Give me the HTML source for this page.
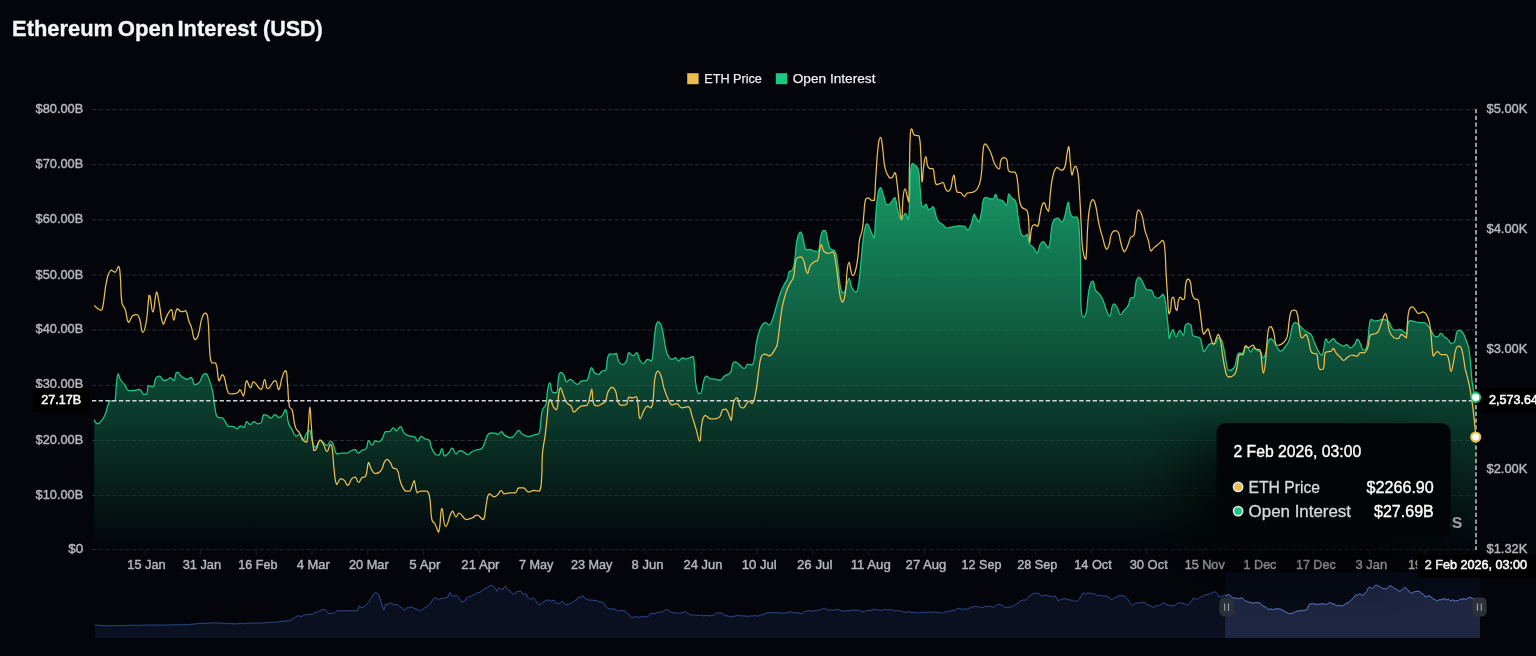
<!DOCTYPE html>
<html lang="en"><head><meta charset="utf-8"><title>Ethereum Open Interest (USD)</title>
<style>
html,body{margin:0;padding:0;background:#03050a;}
body{width:1536px;height:656px;overflow:hidden;font-family:"Liberation Sans",sans-serif;}
svg{display:block;position:absolute;left:0;top:0}
text{font-family:"Liberation Sans",sans-serif;}
</style></head><body>
<svg style="will-change:transform" width="1536" height="656" viewBox="0 0 1536 656">
<defs>
<linearGradient id="g" gradientUnits="userSpaceOnUse" x1="0" y1="163" x2="0" y2="550">
<stop offset="0" stop-color="#1ec683" stop-opacity="0.78"/><stop offset="1" stop-color="#1ec683" stop-opacity="0"/>
</linearGradient>
<filter id="ts" filterUnits="userSpaceOnUse" x="1000" y="300" width="536" height="356"><feGaussianBlur stdDeviation="30"/></filter>
<path id="area" d="M94.2 419.6C94.2 419.6 95.6 423.6 97.5 423.8C99.4 423.8 100.0 422.5 101.7 420.4C103.8 417.8 103.8 417.6 105.1 414.5C106.8 410.5 106.1 410.2 107.6 406.2C108.6 403.5 108.1 402.7 110.1 401.1C111.9 400.3 114.4 401.1 115.1 400.3C116.5 393.5 115.5 391.9 116.5 383.5C117.1 378.6 117.0 375.1 118.2 373.8C118.9 373.8 118.7 376.8 120.2 379.3C121.8 382.1 122.4 381.7 124.4 384.4C126.6 387.4 125.8 388.8 128.6 390.7C130.4 390.7 131.1 390.7 133.6 390.7C136.6 390.3 137.1 389.4 139.5 389.4C142.1 390.4 141.2 392.7 143.6 394.4C144.8 394.4 146.1 394.4 146.7 394.4C148.3 391.1 146.7 387.9 148.3 385.5C149.4 385.5 151.6 386.9 152.9 386.9C155.5 384.3 153.8 381.6 156.2 377.7C157.1 376.2 158.2 376.0 159.6 376.0C162.0 376.9 161.3 379.7 163.8 380.7C165.5 380.7 166.0 380.2 168.0 379.3C169.3 378.7 169.3 377.7 170.5 377.7C172.2 378.1 172.8 380.7 173.8 380.7C175.7 379.0 174.6 376.1 176.3 372.6C176.7 372.3 177.4 372.3 178.0 372.3C179.9 373.7 179.3 374.7 181.4 376.3C183.9 378.2 184.3 379.0 187.2 379.3C189.1 379.3 189.8 377.3 191.1 377.3C193.6 379.1 192.3 383.0 194.8 384.7C196.2 384.7 197.6 384.4 199.0 382.7C201.8 379.4 200.6 378.1 203.2 374.6C204.1 373.5 205.1 373.5 206.0 373.5C208.0 375.1 207.8 376.3 209.0 379.3C211.0 384.6 211.2 384.6 212.4 390.2C214.2 398.5 213.3 398.7 214.9 407.0C215.8 412.1 214.9 413.4 217.4 417.1C218.6 417.9 220.6 417.1 222.4 417.9C226.0 421.0 224.6 423.4 228.3 426.3C230.1 426.6 231.0 426.3 233.3 426.6C235.3 427.2 235.3 428.8 237.0 428.8C238.8 428.6 238.5 426.1 240.4 425.8C242.0 425.8 242.7 427.5 243.9 427.5C245.9 426.2 244.9 422.5 246.7 421.6C248.0 421.6 248.3 424.6 250.1 424.6C252.0 424.6 252.0 421.8 254.0 421.6C255.7 421.6 255.7 423.4 257.6 423.8C259.2 423.8 260.1 423.8 261.0 422.9C263.2 419.6 261.5 416.9 263.8 414.5C264.9 414.5 265.9 415.0 267.7 415.9C269.5 416.8 269.5 418.2 271.1 418.2C273.1 417.8 272.9 414.7 274.9 414.5C276.7 414.5 276.6 417.2 278.6 417.6C280.2 417.6 280.8 417.3 282.0 415.9C284.3 413.2 284.5 409.5 285.6 409.5C287.8 412.1 286.5 416.9 288.7 423.8C289.7 426.9 290.3 426.7 292.0 429.6C293.9 433.0 293.4 434.8 295.9 436.3C297.2 436.3 298.3 434.3 299.6 434.3C301.8 435.6 301.3 440.5 302.9 440.5C304.6 440.4 304.3 436.9 306.3 433.8C307.6 431.7 308.7 430.1 309.6 430.1C311.6 432.4 310.4 435.5 312.1 440.5C313.3 444.0 313.6 447.2 315.5 447.2C317.6 447.1 317.4 441.6 320.0 440.1C321.3 440.1 321.8 441.3 323.4 442.6C325.1 444.0 325.1 445.5 326.7 445.5C328.9 445.0 329.0 441.1 330.9 441.0C332.4 441.0 332.4 442.9 333.4 445.1C335.4 449.4 334.1 451.4 336.8 454.0C338.3 454.0 339.3 453.2 341.8 453.0C344.7 453.0 345.0 453.0 347.7 453.0C349.6 452.5 349.2 451.5 351.0 450.7C352.9 449.8 353.5 449.7 355.2 449.7C357.1 450.3 356.6 453.1 358.2 453.2C359.9 453.2 359.9 451.4 361.9 450.2C363.8 449.1 364.9 450.2 366.1 448.5C368.3 445.4 366.8 441.5 368.6 440.5C369.8 440.5 370.3 445.1 372.0 445.1C373.7 445.1 373.3 441.6 375.3 440.6C376.6 440.6 377.2 441.8 378.7 441.8C380.8 441.2 381.0 440.5 382.4 438.4C384.4 435.4 383.2 434.0 385.4 431.7C386.4 431.7 387.1 431.7 388.7 431.7C389.6 431.6 389.7 431.5 390.4 430.9C392.0 429.6 391.8 427.9 393.3 427.9C394.8 427.9 394.8 430.9 396.3 430.9C398.4 430.5 398.7 426.7 400.5 426.7C402.5 427.2 401.6 430.2 403.8 432.6C405.8 434.8 406.1 434.8 408.9 435.9C411.6 436.8 412.4 435.9 414.7 436.8C416.8 438.1 416.2 441.3 417.7 441.3C419.4 441.2 419.1 437.0 421.1 436.3C422.6 436.3 422.8 437.9 424.8 438.9C426.7 439.8 427.8 438.9 429.0 440.1C431.2 442.9 429.8 444.1 431.5 447.7C433.2 451.4 433.0 452.0 435.7 454.7C436.8 455.2 438.0 455.2 439.0 455.2C441.1 453.1 440.6 448.5 441.9 448.5C443.3 448.7 442.4 454.4 444.4 456.0C445.6 456.0 446.6 455.1 448.2 453.5C450.6 451.2 450.5 448.2 452.4 448.2C454.3 448.3 453.7 453.3 455.8 454.0C457.5 454.0 457.7 451.1 460.0 450.7C461.9 450.7 462.2 451.3 464.2 452.4C466.0 453.3 465.8 454.7 467.5 454.7C470.0 454.4 469.9 452.6 472.6 451.3C474.9 450.1 475.1 450.5 477.6 449.7C479.7 449.1 480.4 449.7 481.8 448.5C484.2 446.0 483.6 445.2 485.1 441.8C486.5 438.5 485.7 437.9 487.6 435.1C488.7 433.5 489.1 433.3 491.0 432.9C493.3 432.9 493.6 432.9 496.0 433.4C497.0 433.6 496.9 434.6 497.7 434.6C499.6 434.0 499.7 431.7 501.4 431.7C503.0 431.8 502.5 434.0 504.4 435.1C507.4 436.9 507.9 437.6 511.1 437.6C513.0 437.6 513.0 436.5 514.5 435.1C516.8 432.9 516.6 430.7 518.7 430.4C520.3 430.4 520.0 432.6 522.0 433.9C524.6 435.6 524.9 435.5 527.9 436.4C528.9 436.4 529.0 436.4 530.0 436.4C532.5 435.8 532.5 435.6 535.0 434.7C537.1 433.9 538.4 434.7 539.2 433.0C540.9 427.8 540.0 426.7 540.9 420.5C541.7 415.0 541.0 414.8 542.6 409.6C543.5 406.8 545.2 407.4 545.9 404.5C547.6 397.7 546.3 397.3 547.6 390.3C548.3 386.4 548.7 382.7 549.8 382.7C551.2 383.3 550.1 389.0 552.6 392.5C553.6 392.5 556.2 392.5 556.8 392.5C558.5 386.7 557.3 385.0 558.5 377.7C559.0 375.0 558.7 373.4 560.2 372.4C561.2 372.4 562.5 372.9 563.5 374.4C565.6 377.6 564.3 380.3 566.5 381.9C567.7 381.9 568.4 379.4 570.2 379.4C572.4 379.6 572.2 381.2 574.4 382.7C576.0 383.7 576.3 384.4 577.8 384.4C579.6 384.0 579.1 382.0 581.1 381.1C583.7 380.2 585.2 381.1 587.0 380.2C589.4 377.8 588.2 376.4 589.5 372.7C590.4 370.2 590.3 367.7 591.5 367.7C592.8 367.7 592.5 370.8 594.5 372.7C596.1 374.2 596.9 374.4 598.7 374.4C600.7 374.0 600.1 372.2 602.1 371.0C603.7 370.2 605.2 371.0 605.9 370.2C607.5 365.4 606.2 364.2 607.5 358.4C608.0 356.0 607.9 355.0 609.6 353.9C611.0 353.9 611.7 354.2 613.8 354.2C615.1 354.1 615.7 353.4 616.3 353.4C618.3 356.3 616.8 358.2 618.9 361.8C620.1 363.8 621.1 364.6 623.0 364.6C624.9 364.4 625.3 363.2 626.4 361.0C628.3 357.2 626.8 354.3 628.9 352.6C630.1 352.6 631.0 355.6 633.1 355.6C635.0 355.6 635.6 352.6 636.8 352.6C638.9 354.0 637.8 356.7 639.8 360.1C641.0 362.1 641.5 363.5 643.2 363.5C645.3 363.3 645.0 360.0 647.4 359.3C649.2 359.3 650.7 361.0 651.5 361.0C653.2 357.7 652.5 355.6 653.2 350.1C654.5 339.5 653.8 339.4 655.4 328.9C656.0 325.2 655.9 323.9 657.6 321.8C658.2 321.8 659.5 321.9 660.1 323.0C662.0 326.3 661.7 326.7 662.6 330.6C664.7 340.3 663.8 340.5 666.1 350.1C667.0 354.0 666.9 354.5 669.1 357.6C670.1 359.1 670.8 359.3 672.5 359.3C673.9 359.3 674.1 357.6 675.3 357.6C677.0 358.1 676.7 360.9 678.4 361.0C680.2 361.0 680.1 358.5 682.2 357.9C683.8 357.9 684.1 358.9 685.9 358.9C688.0 358.8 688.0 358.4 690.1 357.6C691.6 357.1 692.5 356.3 693.0 356.3C694.6 360.6 694.0 362.4 694.6 368.5C695.5 376.9 694.7 377.0 696.0 385.3C696.7 389.6 696.6 390.7 698.5 393.6C699.1 393.6 700.5 393.6 701.0 392.8C703.0 388.1 701.9 387.2 703.5 381.9C704.4 378.8 704.1 376.9 706.0 376.0C707.5 376.0 707.9 377.8 710.2 378.6C712.1 379.1 712.3 378.8 714.4 379.1C717.4 379.6 717.8 380.2 720.3 380.2C722.8 379.4 722.1 377.8 724.5 376.0C727.1 374.0 728.6 375.3 730.3 372.7C732.7 369.0 730.9 367.6 732.8 363.5C733.4 362.2 734.1 361.8 735.4 361.8C737.5 362.3 737.5 363.5 739.6 365.1C741.9 366.8 742.1 368.5 744.2 368.5C746.3 368.2 745.6 365.0 747.9 364.0C749.6 364.0 751.0 365.1 752.1 365.1C754.3 362.7 753.8 361.0 754.6 356.8C755.7 351.0 755.0 350.8 756.0 345.0C757.2 338.5 757.0 338.4 759.0 332.2C760.2 328.3 760.2 328.0 762.4 324.7C763.4 323.2 763.9 322.5 765.4 322.5C767.2 322.6 767.6 325.0 769.1 325.0C771.1 324.2 771.3 322.6 772.4 319.7C775.0 312.8 774.4 312.5 776.6 305.4C778.6 298.7 778.4 298.6 780.8 292.0C782.2 288.1 782.4 288.2 784.2 284.5C785.7 281.5 786.3 281.7 787.5 278.6C788.8 275.4 787.6 274.7 789.2 271.9C790.1 270.3 791.9 271.5 792.6 269.7C794.9 263.9 794.1 263.3 795.1 256.8C796.2 249.3 795.4 249.1 796.7 241.7C797.5 237.2 797.5 237.0 799.3 233.0C799.7 232.2 800.6 232.1 801.0 232.1C802.7 235.2 802.3 236.3 803.5 240.5C804.8 245.1 803.7 246.6 806.0 249.7C807.0 249.7 808.2 249.4 810.2 249.4C812.8 249.9 812.7 251.0 815.3 251.4C816.9 251.4 818.0 251.4 818.6 250.6C820.3 245.7 819.1 244.7 820.3 238.9C821.2 234.6 820.9 233.8 822.8 230.5C823.4 230.5 824.8 230.5 825.3 230.5C827.3 234.5 826.4 235.5 827.8 240.5C829.0 244.7 828.2 245.5 830.4 248.9C831.5 250.6 833.3 248.9 834.5 250.6C836.6 253.7 836.3 254.4 837.0 258.5C838.8 269.3 837.9 269.5 839.5 280.3C840.4 286.6 839.9 287.9 842.0 292.8C842.4 292.8 843.9 292.8 844.5 292.0C846.4 288.5 845.6 287.8 847.0 283.6C847.9 280.9 848.2 278.3 849.1 278.3C850.5 279.3 849.7 283.0 851.6 287.0C852.9 289.8 853.5 291.5 855.4 292.0C856.7 292.0 857.5 290.6 857.9 288.6C860.0 278.1 859.3 277.8 860.5 266.9C861.9 253.7 861.4 253.7 863.0 240.5C863.9 232.9 863.8 232.7 865.6 225.4C865.9 224.3 866.6 223.8 867.2 223.8C869.1 225.8 869.0 227.1 870.6 230.5C872.3 234.2 873.2 238.0 873.9 238.0C875.6 233.2 874.6 227.5 875.6 217.1C876.7 205.3 876.1 205.2 878.1 193.6C878.6 190.5 879.4 187.7 880.6 187.7C881.9 187.9 882.0 191.0 883.2 194.4C885.0 199.4 884.2 200.4 886.5 204.5C887.1 204.5 888.1 204.5 889.0 204.5C891.0 203.1 890.7 202.4 892.4 200.3C893.6 198.8 894.3 197.4 894.9 197.4C896.8 200.6 895.9 203.1 897.4 208.7C898.8 213.8 898.6 215.9 900.8 218.7C901.5 218.7 902.1 217.5 903.3 216.2C904.5 214.9 904.6 213.4 905.5 213.4C907.1 214.5 907.8 219.6 908.3 219.6C909.6 214.8 909.1 210.0 909.6 200.3C910.2 187.7 909.6 187.7 910.5 175.1C910.9 169.2 910.5 166.7 912.2 163.4C912.9 163.4 914.4 164.3 915.9 165.9C917.5 167.7 917.9 167.7 918.4 170.1C920.0 178.2 919.2 178.5 920.0 186.9C920.9 196.1 920.2 196.4 921.7 205.3C921.9 206.5 922.6 207.0 923.4 207.0C924.7 206.6 924.9 204.0 925.9 204.0C927.4 204.8 926.7 207.9 928.4 209.5C929.2 209.5 929.8 209.4 930.9 208.7C932.1 208.0 932.3 206.7 933.0 206.7C934.4 207.8 934.2 209.3 935.1 212.0C936.5 216.2 935.4 216.8 937.6 220.4C939.2 223.1 940.1 222.5 942.7 224.6C944.8 226.3 944.5 227.5 946.9 228.0C949.5 228.0 949.8 227.3 952.7 226.8C956.0 226.2 956.0 225.9 959.4 225.8C961.9 225.8 962.4 225.8 964.5 226.3C966.6 227.4 966.4 230.1 967.8 230.1C969.8 229.4 969.9 227.1 971.2 223.8C973.1 219.2 972.4 216.3 974.2 214.2C974.9 214.2 975.2 216.1 976.2 217.9C977.4 220.0 977.8 222.1 978.7 222.1C980.3 220.8 980.3 218.0 981.2 213.7C982.8 206.2 981.6 205.5 983.7 198.6C984.1 197.4 985.0 197.4 986.3 197.4C987.9 197.4 987.9 198.2 989.6 198.6C991.3 199.0 991.8 199.1 993.0 199.1C994.8 197.8 994.3 194.4 995.5 194.4C996.8 194.5 996.1 197.8 998.0 199.5C999.4 200.3 1000.5 199.5 1002.2 200.3C1004.7 202.1 1005.2 205.3 1006.4 205.3C1008.5 203.2 1007.1 196.6 1008.9 193.9C1009.6 193.9 1009.8 196.1 1011.4 197.8C1013.2 199.7 1014.8 198.7 1015.6 201.1C1018.1 208.4 1016.8 209.1 1018.1 217.1C1019.3 224.6 1018.7 224.8 1020.6 232.1C1021.2 234.4 1021.4 235.2 1023.1 236.3C1024.1 236.3 1024.7 236.2 1026.0 235.5C1026.8 235.1 1026.9 234.2 1027.2 234.2C1028.6 237.5 1027.4 239.3 1029.3 243.4C1030.5 246.0 1031.6 245.3 1033.5 247.6C1035.6 250.2 1035.8 253.1 1037.2 253.1C1039.2 252.1 1038.2 248.3 1040.2 244.2C1040.9 242.7 1041.4 242.8 1042.7 241.8C1043.1 241.7 1043.3 241.7 1043.6 241.7C1045.0 243.1 1044.9 243.4 1046.1 245.1C1047.2 246.7 1047.4 248.4 1048.1 248.4C1049.5 246.7 1049.5 244.3 1050.3 240.1C1051.0 236.2 1050.4 236.1 1051.1 232.2C1052.1 226.3 1051.2 225.5 1053.6 220.5C1054.6 218.4 1055.9 218.0 1057.8 218.0C1060.0 218.5 1060.0 222.2 1061.7 222.2C1063.4 222.0 1063.6 219.8 1064.5 217.1C1066.3 211.4 1065.6 211.2 1067.1 205.4C1067.5 203.7 1068.0 202.1 1068.4 202.1C1069.7 205.3 1068.7 208.2 1070.4 213.8C1071.0 215.7 1071.2 216.3 1072.9 217.1C1074.6 217.1 1076.3 217.1 1077.1 217.1C1079.1 221.5 1078.5 223.0 1079.1 228.9C1080.0 237.8 1079.6 237.8 1080.0 246.8C1080.3 255.1 1080.4 255.1 1080.5 263.5C1080.8 281.9 1080.5 282.0 1080.8 300.4C1081.0 307.6 1080.8 307.8 1081.8 314.7C1082.1 316.2 1083.0 317.2 1083.8 317.2C1085.2 316.4 1085.7 314.8 1086.3 312.1C1087.8 304.8 1086.9 304.6 1088.0 297.1C1089.0 290.3 1088.5 290.0 1090.5 283.6C1091.0 282.0 1092.3 281.1 1093.0 281.1C1094.9 283.6 1093.5 286.2 1095.6 290.4C1096.9 292.9 1098.0 292.2 1099.7 294.5C1101.7 297.2 1101.8 297.3 1103.1 300.4C1105.2 305.3 1104.4 305.6 1106.5 310.5C1107.8 313.6 1108.7 316.3 1109.8 316.3C1111.4 315.3 1110.5 311.5 1112.0 307.1C1112.6 305.3 1112.9 303.8 1114.0 303.8C1115.6 304.1 1116.0 305.7 1117.4 308.0C1119.2 311.1 1118.5 314.0 1120.4 314.7C1121.8 314.7 1122.3 312.6 1124.1 310.5C1126.2 308.0 1126.7 308.2 1128.2 305.4C1130.0 301.9 1128.7 300.8 1130.8 297.9C1131.7 297.1 1133.6 297.9 1134.1 297.1C1136.1 290.6 1134.3 289.2 1136.1 282.0C1136.8 279.4 1137.5 277.4 1139.1 277.4C1140.7 277.4 1141.0 279.6 1142.5 282.0C1144.8 285.6 1143.8 286.9 1146.7 289.5C1148.4 290.4 1150.0 289.5 1151.7 290.4C1153.8 292.3 1152.4 293.8 1154.2 296.2C1155.4 297.8 1155.9 298.4 1157.6 298.4C1159.3 298.4 1159.3 297.4 1160.9 296.2C1162.0 295.3 1162.4 294.2 1163.0 294.2C1164.5 295.7 1164.5 297.2 1165.1 300.4C1166.4 307.0 1166.0 307.1 1166.8 313.8C1167.7 322.2 1167.7 322.2 1168.5 330.6C1168.9 334.6 1168.5 338.3 1169.2 338.6C1169.9 338.6 1170.0 335.1 1171.4 331.9C1172.0 330.6 1172.5 329.7 1173.1 329.7C1174.8 331.5 1174.2 336.6 1175.9 336.9C1177.5 336.9 1177.7 331.1 1179.8 330.7C1181.5 330.7 1182.5 335.3 1183.5 335.3C1185.1 333.9 1183.6 330.3 1185.1 326.0C1185.7 324.4 1186.2 323.7 1187.7 323.5C1189.2 323.5 1190.3 323.6 1191.0 325.2C1192.7 329.5 1191.0 331.2 1192.7 335.3C1193.6 336.9 1194.8 336.0 1196.9 336.9C1198.6 337.6 1199.5 337.0 1200.2 338.6C1203.0 344.4 1201.4 349.2 1203.9 351.7C1205.2 351.7 1205.6 348.7 1207.8 346.2C1209.2 344.5 1209.2 344.0 1211.1 343.3C1212.9 343.3 1214.0 343.6 1215.3 343.6C1217.3 342.0 1216.0 339.1 1217.8 337.8C1218.9 337.8 1220.4 337.9 1221.2 339.5C1223.8 345.0 1223.1 345.7 1224.5 352.0C1226.1 359.5 1225.4 359.7 1227.1 367.1C1227.5 368.9 1227.4 370.3 1228.7 370.5C1230.7 370.5 1232.2 370.1 1233.8 368.0C1236.0 365.0 1235.2 364.2 1236.3 360.4C1237.3 357.1 1236.5 356.4 1238.0 353.7C1238.6 352.9 1239.4 352.9 1240.5 352.9C1241.9 353.4 1242.3 355.4 1243.0 355.4C1244.8 353.3 1243.6 349.9 1245.5 347.0C1246.1 347.0 1247.1 347.0 1248.0 347.8C1249.6 349.4 1249.1 352.0 1250.5 352.0C1252.0 352.0 1252.0 348.3 1253.9 347.8C1255.4 347.8 1255.4 349.3 1257.2 350.4C1258.8 351.4 1259.5 350.6 1260.6 352.0C1262.5 354.4 1261.7 357.4 1263.1 357.9C1264.2 357.9 1264.9 356.0 1265.6 353.7C1267.4 348.1 1266.3 347.6 1268.1 342.0C1268.8 340.0 1269.2 338.6 1270.6 338.6C1272.2 338.6 1272.6 340.1 1274.0 342.0C1276.0 344.7 1275.4 345.1 1277.4 347.8C1278.8 349.7 1279.0 351.2 1280.7 351.2C1282.8 351.0 1283.1 349.3 1284.9 347.0C1287.3 343.9 1287.8 344.0 1289.1 340.3C1291.5 333.5 1290.1 332.9 1292.4 326.0C1293.1 323.9 1293.4 322.8 1295.0 322.4C1296.4 322.4 1296.8 323.2 1298.3 324.4C1300.6 326.3 1300.3 326.6 1302.5 328.6C1304.5 330.4 1304.5 330.4 1306.7 331.9C1308.7 333.3 1309.5 332.5 1310.9 334.4C1313.3 337.6 1312.5 338.2 1314.2 342.0C1316.3 346.6 1315.9 346.8 1318.4 351.2C1319.7 353.5 1320.7 355.4 1321.8 355.4C1323.5 354.1 1322.9 351.2 1324.0 347.0C1325.0 342.8 1324.6 339.9 1326.0 338.6C1326.8 338.6 1327.0 342.3 1328.5 342.8C1329.5 342.8 1329.7 341.4 1331.0 340.3C1332.2 339.3 1332.5 338.6 1333.5 338.6C1335.0 339.1 1334.4 340.6 1336.0 342.0C1337.8 343.6 1338.1 343.3 1340.2 344.5C1341.9 345.4 1341.9 346.2 1343.6 346.2C1345.3 346.2 1345.4 344.5 1346.9 344.5C1348.8 344.9 1348.5 347.8 1350.3 347.8C1352.3 347.8 1352.8 346.5 1354.5 344.5C1356.4 342.2 1355.9 339.3 1357.5 339.1C1358.8 339.1 1359.0 341.3 1360.3 343.6C1362.1 346.9 1361.8 349.9 1363.7 350.4C1365.2 350.4 1366.4 348.2 1367.0 345.3C1369.3 334.8 1367.9 334.3 1369.6 323.5C1370.0 321.3 1369.8 320.0 1371.2 319.3C1372.3 319.3 1372.8 320.8 1374.6 321.0C1377.0 321.0 1377.1 320.7 1379.6 320.2C1381.7 319.8 1381.8 319.3 1383.8 319.3C1386.4 319.8 1387.0 319.9 1388.8 321.9C1391.2 324.6 1389.9 325.8 1392.2 328.6C1393.3 330.0 1393.8 330.0 1395.5 330.2C1397.5 330.2 1397.7 329.4 1399.7 329.4C1401.9 329.9 1401.9 330.5 1403.9 331.9C1405.2 332.8 1405.9 333.9 1406.4 333.9C1408.0 330.7 1406.8 328.5 1408.1 323.5C1408.5 321.9 1408.5 321.2 1409.8 320.7C1411.5 320.7 1412.0 320.8 1414.1 321.3C1416.6 321.8 1416.6 322.3 1419.1 322.7C1421.6 322.7 1421.9 322.7 1424.2 322.7C1426.1 323.3 1426.1 323.7 1427.5 325.2C1429.5 327.4 1429.3 327.6 1430.9 330.2C1432.7 333.1 1432.0 333.9 1434.2 336.1C1435.3 336.9 1436.2 336.9 1437.6 336.9C1439.6 336.1 1439.2 333.3 1440.9 333.3C1442.6 333.3 1442.4 335.3 1444.3 336.9C1445.8 338.2 1446.2 337.7 1447.6 339.1C1449.5 340.9 1449.0 342.4 1451.0 343.3C1452.4 343.3 1453.6 343.3 1454.4 342.0C1456.6 337.8 1455.0 336.5 1456.9 331.9C1457.5 330.6 1458.2 330.2 1459.4 330.2C1461.1 330.4 1461.6 331.0 1462.7 332.7C1464.9 336.1 1464.6 336.4 1466.1 340.3C1467.5 344.0 1467.8 343.9 1468.6 347.8C1469.9 354.0 1469.6 354.1 1470.3 360.4C1471.3 370.4 1470.9 370.5 1472.0 380.5C1472.6 385.6 1472.5 385.6 1473.6 390.6C1474.4 394.1 1475.9 397.5 1475.9 397.5L1475.9 549.6L94.2 549.6Z"/>
<mask id="gm" maskUnits="userSpaceOnUse" x="0" y="0" width="1536" height="656"><rect width="1536" height="656" fill="#fff"/><use href="#area" fill="#000" fill-opacity="0.45"/></mask>
</defs>
<rect width="1536" height="656" fill="#03050a"/>

<text y="36.3" font-size="22" font-weight="700" fill="#f4f5f6" stroke="#f4f5f6" stroke-width="0.35" stroke-linejoin="round"><tspan x="12.1" textLength="100.9" lengthAdjust="spacingAndGlyphs">Ethereum</tspan> <tspan x="117.7" textLength="56.5" lengthAdjust="spacingAndGlyphs">Open</tspan> <tspan x="177.5" textLength="79.4" lengthAdjust="spacingAndGlyphs">Interest</tspan> <tspan x="263" textLength="59.8" lengthAdjust="spacingAndGlyphs">(USD)</tspan></text>
<rect x="687.2" y="73.2" width="11.4" height="11" fill="#ebbe4f"/>
<text x="704.3" y="82.6" font-size="13.5" fill="#eceef0" text-anchor="start" font-weight="400" stroke="#eceef0" stroke-width="0.25" stroke-linejoin="round" textLength="57.6" lengthAdjust="spacingAndGlyphs" >ETH Price</text>
<rect x="775.8" y="73.2" width="11.4" height="11" fill="#1ec683"/>
<text x="792.7" y="82.6" font-size="13.5" fill="#eceef0" text-anchor="start" font-weight="400" stroke="#eceef0" stroke-width="0.25" stroke-linejoin="round" textLength="82.8" lengthAdjust="spacingAndGlyphs" >Open Interest</text>
<g mask="url(#gm)">
<line x1="92" x2="1476" y1="109.7" y2="109.7" stroke="#2b2e33" stroke-width="1" stroke-dasharray="4.25 2.45"/>
<line x1="92" x2="1476" y1="164.7" y2="164.7" stroke="#2b2e33" stroke-width="1" stroke-dasharray="4.25 2.45"/>
<line x1="92" x2="1476" y1="219.9" y2="219.9" stroke="#2b2e33" stroke-width="1" stroke-dasharray="4.25 2.45"/>
<line x1="92" x2="1476" y1="275.0" y2="275.0" stroke="#2b2e33" stroke-width="1" stroke-dasharray="4.25 2.45"/>
<line x1="92" x2="1476" y1="330.0" y2="330.0" stroke="#2b2e33" stroke-width="1" stroke-dasharray="4.25 2.45"/>
<line x1="92" x2="1476" y1="385.3" y2="385.3" stroke="#2b2e33" stroke-width="1" stroke-dasharray="4.25 2.45"/>
<line x1="92" x2="1476" y1="440.5" y2="440.5" stroke="#2b2e33" stroke-width="1" stroke-dasharray="4.25 2.45"/>
<line x1="92" x2="1476" y1="495.4" y2="495.4" stroke="#2b2e33" stroke-width="1" stroke-dasharray="4.25 2.45"/>
<line x1="92" x2="1476" y1="549.6" y2="549.6" stroke="#2b2e33" stroke-width="1" stroke-dasharray="4.25 2.45"/>
</g>
<text x="83.2" y="113" font-size="13.4" fill="#b4b6b9" text-anchor="end" font-weight="400" stroke="#b4b6b9" stroke-width="0.45" stroke-linejoin="round" textLength="47.6" lengthAdjust="spacingAndGlyphs" >$80.00B</text>
<text x="83.2" y="168" font-size="13.4" fill="#b4b6b9" text-anchor="end" font-weight="400" stroke="#b4b6b9" stroke-width="0.45" stroke-linejoin="round" textLength="47.6" lengthAdjust="spacingAndGlyphs" >$70.00B</text>
<text x="83.2" y="223" font-size="13.4" fill="#b4b6b9" text-anchor="end" font-weight="400" stroke="#b4b6b9" stroke-width="0.45" stroke-linejoin="round" textLength="47.6" lengthAdjust="spacingAndGlyphs" >$60.00B</text>
<text x="83.2" y="279" font-size="13.4" fill="#b4b6b9" text-anchor="end" font-weight="400" stroke="#b4b6b9" stroke-width="0.45" stroke-linejoin="round" textLength="47.6" lengthAdjust="spacingAndGlyphs" >$50.00B</text>
<text x="83.2" y="333" font-size="13.4" fill="#b4b6b9" text-anchor="end" font-weight="400" stroke="#b4b6b9" stroke-width="0.45" stroke-linejoin="round" textLength="47.6" lengthAdjust="spacingAndGlyphs" >$40.00B</text>
<text x="83.2" y="388" font-size="13.4" fill="#b4b6b9" text-anchor="end" font-weight="400" stroke="#b4b6b9" stroke-width="0.45" stroke-linejoin="round" textLength="47.6" lengthAdjust="spacingAndGlyphs" >$30.00B</text>
<text x="83.2" y="444" font-size="13.4" fill="#b4b6b9" text-anchor="end" font-weight="400" stroke="#b4b6b9" stroke-width="0.45" stroke-linejoin="round" textLength="47.6" lengthAdjust="spacingAndGlyphs" >$20.00B</text>
<text x="83.2" y="499" font-size="13.4" fill="#b4b6b9" text-anchor="end" font-weight="400" stroke="#b4b6b9" stroke-width="0.45" stroke-linejoin="round" textLength="47.6" lengthAdjust="spacingAndGlyphs" >$10.00B</text>
<text x="83.2" y="553" font-size="13.4" fill="#b4b6b9" text-anchor="end" font-weight="400" stroke="#b4b6b9" stroke-width="0.45" stroke-linejoin="round" >$0</text>
<text x="1486.5" y="113" font-size="13.4" fill="#b4b6b9" text-anchor="start" font-weight="400" stroke="#b4b6b9" stroke-width="0.45" stroke-linejoin="round" textLength="40.8" lengthAdjust="spacingAndGlyphs" >$5.00K</text>
<text x="1486.5" y="233" font-size="13.4" fill="#b4b6b9" text-anchor="start" font-weight="400" stroke="#b4b6b9" stroke-width="0.45" stroke-linejoin="round" textLength="40.8" lengthAdjust="spacingAndGlyphs" >$4.00K</text>
<text x="1486.5" y="353" font-size="13.4" fill="#b4b6b9" text-anchor="start" font-weight="400" stroke="#b4b6b9" stroke-width="0.45" stroke-linejoin="round" textLength="40.8" lengthAdjust="spacingAndGlyphs" >$3.00K</text>
<text x="1486.5" y="473" font-size="13.4" fill="#b4b6b9" text-anchor="start" font-weight="400" stroke="#b4b6b9" stroke-width="0.45" stroke-linejoin="round" textLength="40.8" lengthAdjust="spacingAndGlyphs" >$2.00K</text>
<text x="1486.5" y="553" font-size="13.4" fill="#b4b6b9" text-anchor="start" font-weight="400" stroke="#b4b6b9" stroke-width="0.45" stroke-linejoin="round" textLength="40.8" lengthAdjust="spacingAndGlyphs" >$1.32K</text>
<line x1="145.0" x2="145.0" y1="549.6" y2="555.1" stroke="#191c21" stroke-width="1"/>
<text x="146.5" y="569" font-size="13.4" fill="#b4b6b9" text-anchor="middle" font-weight="400" stroke="#b4b6b9" stroke-width="0.45" stroke-linejoin="round" textLength="38.4" lengthAdjust="spacingAndGlyphs" >15 Jan</text>
<line x1="200.7" x2="200.7" y1="549.6" y2="555.1" stroke="#191c21" stroke-width="1"/>
<text x="201.9" y="569" font-size="13.4" fill="#b4b6b9" text-anchor="middle" font-weight="400" stroke="#b4b6b9" stroke-width="0.45" stroke-linejoin="round" textLength="38.5" lengthAdjust="spacingAndGlyphs" >31 Jan</text>
<line x1="256.3" x2="256.3" y1="549.6" y2="555.1" stroke="#191c21" stroke-width="1"/>
<text x="257.9" y="569" font-size="13.4" fill="#b4b6b9" text-anchor="middle" font-weight="400" stroke="#b4b6b9" stroke-width="0.45" stroke-linejoin="round" textLength="39.1" lengthAdjust="spacingAndGlyphs" >16 Feb</text>
<line x1="312.0" x2="312.0" y1="549.6" y2="555.1" stroke="#191c21" stroke-width="1"/>
<text x="313.2" y="569" font-size="13.4" fill="#b4b6b9" text-anchor="middle" font-weight="400" stroke="#b4b6b9" stroke-width="0.45" stroke-linejoin="round" textLength="33.1" lengthAdjust="spacingAndGlyphs" >4 Mar</text>
<line x1="367.6" x2="367.6" y1="549.6" y2="555.1" stroke="#191c21" stroke-width="1"/>
<text x="368.8" y="569" font-size="13.4" fill="#b4b6b9" text-anchor="middle" font-weight="400" stroke="#b4b6b9" stroke-width="0.45" stroke-linejoin="round" textLength="39.8" lengthAdjust="spacingAndGlyphs" >20 Mar</text>
<line x1="423.3" x2="423.3" y1="549.6" y2="555.1" stroke="#191c21" stroke-width="1"/>
<text x="424.9" y="569" font-size="13.4" fill="#b4b6b9" text-anchor="middle" font-weight="400" stroke="#b4b6b9" stroke-width="0.45" stroke-linejoin="round" textLength="31.1" lengthAdjust="spacingAndGlyphs" >5 Apr</text>
<line x1="479.0" x2="479.0" y1="549.6" y2="555.1" stroke="#191c21" stroke-width="1"/>
<text x="480.4" y="569" font-size="13.4" fill="#b4b6b9" text-anchor="middle" font-weight="400" stroke="#b4b6b9" stroke-width="0.45" stroke-linejoin="round" textLength="38.1" lengthAdjust="spacingAndGlyphs" >21 Apr</text>
<line x1="534.6" x2="534.6" y1="549.6" y2="555.1" stroke="#191c21" stroke-width="1"/>
<text x="536.2" y="569" font-size="13.4" fill="#b4b6b9" text-anchor="middle" font-weight="400" stroke="#b4b6b9" stroke-width="0.45" stroke-linejoin="round" textLength="34.5" lengthAdjust="spacingAndGlyphs" >7 May</text>
<line x1="590.3" x2="590.3" y1="549.6" y2="555.1" stroke="#191c21" stroke-width="1"/>
<text x="591.7" y="569" font-size="13.4" fill="#b4b6b9" text-anchor="middle" font-weight="400" stroke="#b4b6b9" stroke-width="0.45" stroke-linejoin="round" textLength="41.5" lengthAdjust="spacingAndGlyphs" >23 May</text>
<line x1="645.9" x2="645.9" y1="549.6" y2="555.1" stroke="#191c21" stroke-width="1"/>
<text x="647.5" y="569" font-size="13.4" fill="#b4b6b9" text-anchor="middle" font-weight="400" stroke="#b4b6b9" stroke-width="0.45" stroke-linejoin="round" textLength="31.8" lengthAdjust="spacingAndGlyphs" >8 Jun</text>
<line x1="701.6" x2="701.6" y1="549.6" y2="555.1" stroke="#191c21" stroke-width="1"/>
<text x="703" y="569" font-size="13.4" fill="#b4b6b9" text-anchor="middle" font-weight="400" stroke="#b4b6b9" stroke-width="0.45" stroke-linejoin="round" textLength="38.8" lengthAdjust="spacingAndGlyphs" >24 Jun</text>
<line x1="757.3" x2="757.3" y1="549.6" y2="555.1" stroke="#191c21" stroke-width="1"/>
<text x="759.2" y="569" font-size="13.4" fill="#b4b6b9" text-anchor="middle" font-weight="400" stroke="#b4b6b9" stroke-width="0.45" stroke-linejoin="round" textLength="35.1" lengthAdjust="spacingAndGlyphs" >10 Jul</text>
<line x1="812.9" x2="812.9" y1="549.6" y2="555.1" stroke="#191c21" stroke-width="1"/>
<text x="814.7" y="569" font-size="13.4" fill="#b4b6b9" text-anchor="middle" font-weight="400" stroke="#b4b6b9" stroke-width="0.45" stroke-linejoin="round" textLength="35.5" lengthAdjust="spacingAndGlyphs" >26 Jul</text>
<line x1="868.6" x2="868.6" y1="549.6" y2="555.1" stroke="#191c21" stroke-width="1"/>
<text x="870.7" y="569" font-size="13.4" fill="#b4b6b9" text-anchor="middle" font-weight="400" stroke="#b4b6b9" stroke-width="0.45" stroke-linejoin="round" textLength="40.1" lengthAdjust="spacingAndGlyphs" >11 Aug</text>
<line x1="924.2" x2="924.2" y1="549.6" y2="555.1" stroke="#191c21" stroke-width="1"/>
<text x="926" y="569" font-size="13.4" fill="#b4b6b9" text-anchor="middle" font-weight="400" stroke="#b4b6b9" stroke-width="0.45" stroke-linejoin="round" textLength="40.8" lengthAdjust="spacingAndGlyphs" >27 Aug</text>
<line x1="979.9" x2="979.9" y1="549.6" y2="555.1" stroke="#191c21" stroke-width="1"/>
<text x="981.5" y="569" font-size="13.4" fill="#b4b6b9" text-anchor="middle" font-weight="400" stroke="#b4b6b9" stroke-width="0.45" stroke-linejoin="round" textLength="39.8" lengthAdjust="spacingAndGlyphs" >12 Sep</text>
<line x1="1035.6" x2="1035.6" y1="549.6" y2="555.1" stroke="#191c21" stroke-width="1"/>
<text x="1037.3" y="569" font-size="13.4" fill="#b4b6b9" text-anchor="middle" font-weight="400" stroke="#b4b6b9" stroke-width="0.45" stroke-linejoin="round" textLength="40.1" lengthAdjust="spacingAndGlyphs" >28 Sep</text>
<line x1="1091.2" x2="1091.2" y1="549.6" y2="555.1" stroke="#191c21" stroke-width="1"/>
<text x="1093" y="569" font-size="13.4" fill="#b4b6b9" text-anchor="middle" font-weight="400" stroke="#b4b6b9" stroke-width="0.45" stroke-linejoin="round" textLength="37.5" lengthAdjust="spacingAndGlyphs" >14 Oct</text>
<line x1="1146.9" x2="1146.9" y1="549.6" y2="555.1" stroke="#191c21" stroke-width="1"/>
<text x="1148.7" y="569" font-size="13.4" fill="#b4b6b9" text-anchor="middle" font-weight="400" stroke="#b4b6b9" stroke-width="0.45" stroke-linejoin="round" textLength="38.1" lengthAdjust="spacingAndGlyphs" >30 Oct</text>
<line x1="1202.5" x2="1202.5" y1="549.6" y2="555.1" stroke="#191c21" stroke-width="1"/>
<text x="1204.7" y="569" font-size="13.4" fill="#b4b6b9" text-anchor="middle" font-weight="400" stroke="#b4b6b9" stroke-width="0.45" stroke-linejoin="round" textLength="40.1" lengthAdjust="spacingAndGlyphs" >15 Nov</text>
<line x1="1258.2" x2="1258.2" y1="549.6" y2="555.1" stroke="#191c21" stroke-width="1"/>
<text x="1260" y="569" font-size="13.4" fill="#b4b6b9" text-anchor="middle" font-weight="400" stroke="#b4b6b9" stroke-width="0.45" stroke-linejoin="round" textLength="32.8" lengthAdjust="spacingAndGlyphs" >1 Dec</text>
<line x1="1313.9" x2="1313.9" y1="549.6" y2="555.1" stroke="#191c21" stroke-width="1"/>
<text x="1315.8" y="569" font-size="13.4" fill="#b4b6b9" text-anchor="middle" font-weight="400" stroke="#b4b6b9" stroke-width="0.45" stroke-linejoin="round" textLength="39.8" lengthAdjust="spacingAndGlyphs" >17 Dec</text>
<line x1="1369.5" x2="1369.5" y1="549.6" y2="555.1" stroke="#191c21" stroke-width="1"/>
<text x="1371.3" y="569" font-size="13.4" fill="#b4b6b9" text-anchor="middle" font-weight="400" stroke="#b4b6b9" stroke-width="0.45" stroke-linejoin="round" textLength="31.5" lengthAdjust="spacingAndGlyphs" >3 Jan</text>
<line x1="1425.2" x2="1425.2" y1="549.6" y2="555.1" stroke="#191c21" stroke-width="1"/>
<text x="1427.2" y="569" font-size="13.4" fill="#b4b6b9" text-anchor="middle" font-weight="400" stroke="#b4b6b9" stroke-width="0.45" stroke-linejoin="round" textLength="38.4" lengthAdjust="spacingAndGlyphs" >19 Jan</text>
<use href="#area" fill="url(#g)"/>
<path d="M94.2 419.6C94.2 419.6 95.6 423.6 97.5 423.8C99.4 423.8 100.0 422.5 101.7 420.4C103.8 417.8 103.8 417.6 105.1 414.5C106.8 410.5 106.1 410.2 107.6 406.2C108.6 403.5 108.1 402.7 110.1 401.1C111.9 400.3 114.4 401.1 115.1 400.3C116.5 393.5 115.5 391.9 116.5 383.5C117.1 378.6 117.0 375.1 118.2 373.8C118.9 373.8 118.7 376.8 120.2 379.3C121.8 382.1 122.4 381.7 124.4 384.4C126.6 387.4 125.8 388.8 128.6 390.7C130.4 390.7 131.1 390.7 133.6 390.7C136.6 390.3 137.1 389.4 139.5 389.4C142.1 390.4 141.2 392.7 143.6 394.4C144.8 394.4 146.1 394.4 146.7 394.4C148.3 391.1 146.7 387.9 148.3 385.5C149.4 385.5 151.6 386.9 152.9 386.9C155.5 384.3 153.8 381.6 156.2 377.7C157.1 376.2 158.2 376.0 159.6 376.0C162.0 376.9 161.3 379.7 163.8 380.7C165.5 380.7 166.0 380.2 168.0 379.3C169.3 378.7 169.3 377.7 170.5 377.7C172.2 378.1 172.8 380.7 173.8 380.7C175.7 379.0 174.6 376.1 176.3 372.6C176.7 372.3 177.4 372.3 178.0 372.3C179.9 373.7 179.3 374.7 181.4 376.3C183.9 378.2 184.3 379.0 187.2 379.3C189.1 379.3 189.8 377.3 191.1 377.3C193.6 379.1 192.3 383.0 194.8 384.7C196.2 384.7 197.6 384.4 199.0 382.7C201.8 379.4 200.6 378.1 203.2 374.6C204.1 373.5 205.1 373.5 206.0 373.5C208.0 375.1 207.8 376.3 209.0 379.3C211.0 384.6 211.2 384.6 212.4 390.2C214.2 398.5 213.3 398.7 214.9 407.0C215.8 412.1 214.9 413.4 217.4 417.1C218.6 417.9 220.6 417.1 222.4 417.9C226.0 421.0 224.6 423.4 228.3 426.3C230.1 426.6 231.0 426.3 233.3 426.6C235.3 427.2 235.3 428.8 237.0 428.8C238.8 428.6 238.5 426.1 240.4 425.8C242.0 425.8 242.7 427.5 243.9 427.5C245.9 426.2 244.9 422.5 246.7 421.6C248.0 421.6 248.3 424.6 250.1 424.6C252.0 424.6 252.0 421.8 254.0 421.6C255.7 421.6 255.7 423.4 257.6 423.8C259.2 423.8 260.1 423.8 261.0 422.9C263.2 419.6 261.5 416.9 263.8 414.5C264.9 414.5 265.9 415.0 267.7 415.9C269.5 416.8 269.5 418.2 271.1 418.2C273.1 417.8 272.9 414.7 274.9 414.5C276.7 414.5 276.6 417.2 278.6 417.6C280.2 417.6 280.8 417.3 282.0 415.9C284.3 413.2 284.5 409.5 285.6 409.5C287.8 412.1 286.5 416.9 288.7 423.8C289.7 426.9 290.3 426.7 292.0 429.6C293.9 433.0 293.4 434.8 295.9 436.3C297.2 436.3 298.3 434.3 299.6 434.3C301.8 435.6 301.3 440.5 302.9 440.5C304.6 440.4 304.3 436.9 306.3 433.8C307.6 431.7 308.7 430.1 309.6 430.1C311.6 432.4 310.4 435.5 312.1 440.5C313.3 444.0 313.6 447.2 315.5 447.2C317.6 447.1 317.4 441.6 320.0 440.1C321.3 440.1 321.8 441.3 323.4 442.6C325.1 444.0 325.1 445.5 326.7 445.5C328.9 445.0 329.0 441.1 330.9 441.0C332.4 441.0 332.4 442.9 333.4 445.1C335.4 449.4 334.1 451.4 336.8 454.0C338.3 454.0 339.3 453.2 341.8 453.0C344.7 453.0 345.0 453.0 347.7 453.0C349.6 452.5 349.2 451.5 351.0 450.7C352.9 449.8 353.5 449.7 355.2 449.7C357.1 450.3 356.6 453.1 358.2 453.2C359.9 453.2 359.9 451.4 361.9 450.2C363.8 449.1 364.9 450.2 366.1 448.5C368.3 445.4 366.8 441.5 368.6 440.5C369.8 440.5 370.3 445.1 372.0 445.1C373.7 445.1 373.3 441.6 375.3 440.6C376.6 440.6 377.2 441.8 378.7 441.8C380.8 441.2 381.0 440.5 382.4 438.4C384.4 435.4 383.2 434.0 385.4 431.7C386.4 431.7 387.1 431.7 388.7 431.7C389.6 431.6 389.7 431.5 390.4 430.9C392.0 429.6 391.8 427.9 393.3 427.9C394.8 427.9 394.8 430.9 396.3 430.9C398.4 430.5 398.7 426.7 400.5 426.7C402.5 427.2 401.6 430.2 403.8 432.6C405.8 434.8 406.1 434.8 408.9 435.9C411.6 436.8 412.4 435.9 414.7 436.8C416.8 438.1 416.2 441.3 417.7 441.3C419.4 441.2 419.1 437.0 421.1 436.3C422.6 436.3 422.8 437.9 424.8 438.9C426.7 439.8 427.8 438.9 429.0 440.1C431.2 442.9 429.8 444.1 431.5 447.7C433.2 451.4 433.0 452.0 435.7 454.7C436.8 455.2 438.0 455.2 439.0 455.2C441.1 453.1 440.6 448.5 441.9 448.5C443.3 448.7 442.4 454.4 444.4 456.0C445.6 456.0 446.6 455.1 448.2 453.5C450.6 451.2 450.5 448.2 452.4 448.2C454.3 448.3 453.7 453.3 455.8 454.0C457.5 454.0 457.7 451.1 460.0 450.7C461.9 450.7 462.2 451.3 464.2 452.4C466.0 453.3 465.8 454.7 467.5 454.7C470.0 454.4 469.9 452.6 472.6 451.3C474.9 450.1 475.1 450.5 477.6 449.7C479.7 449.1 480.4 449.7 481.8 448.5C484.2 446.0 483.6 445.2 485.1 441.8C486.5 438.5 485.7 437.9 487.6 435.1C488.7 433.5 489.1 433.3 491.0 432.9C493.3 432.9 493.6 432.9 496.0 433.4C497.0 433.6 496.9 434.6 497.7 434.6C499.6 434.0 499.7 431.7 501.4 431.7C503.0 431.8 502.5 434.0 504.4 435.1C507.4 436.9 507.9 437.6 511.1 437.6C513.0 437.6 513.0 436.5 514.5 435.1C516.8 432.9 516.6 430.7 518.7 430.4C520.3 430.4 520.0 432.6 522.0 433.9C524.6 435.6 524.9 435.5 527.9 436.4C528.9 436.4 529.0 436.4 530.0 436.4C532.5 435.8 532.5 435.6 535.0 434.7C537.1 433.9 538.4 434.7 539.2 433.0C540.9 427.8 540.0 426.7 540.9 420.5C541.7 415.0 541.0 414.8 542.6 409.6C543.5 406.8 545.2 407.4 545.9 404.5C547.6 397.7 546.3 397.3 547.6 390.3C548.3 386.4 548.7 382.7 549.8 382.7C551.2 383.3 550.1 389.0 552.6 392.5C553.6 392.5 556.2 392.5 556.8 392.5C558.5 386.7 557.3 385.0 558.5 377.7C559.0 375.0 558.7 373.4 560.2 372.4C561.2 372.4 562.5 372.9 563.5 374.4C565.6 377.6 564.3 380.3 566.5 381.9C567.7 381.9 568.4 379.4 570.2 379.4C572.4 379.6 572.2 381.2 574.4 382.7C576.0 383.7 576.3 384.4 577.8 384.4C579.6 384.0 579.1 382.0 581.1 381.1C583.7 380.2 585.2 381.1 587.0 380.2C589.4 377.8 588.2 376.4 589.5 372.7C590.4 370.2 590.3 367.7 591.5 367.7C592.8 367.7 592.5 370.8 594.5 372.7C596.1 374.2 596.9 374.4 598.7 374.4C600.7 374.0 600.1 372.2 602.1 371.0C603.7 370.2 605.2 371.0 605.9 370.2C607.5 365.4 606.2 364.2 607.5 358.4C608.0 356.0 607.9 355.0 609.6 353.9C611.0 353.9 611.7 354.2 613.8 354.2C615.1 354.1 615.7 353.4 616.3 353.4C618.3 356.3 616.8 358.2 618.9 361.8C620.1 363.8 621.1 364.6 623.0 364.6C624.9 364.4 625.3 363.2 626.4 361.0C628.3 357.2 626.8 354.3 628.9 352.6C630.1 352.6 631.0 355.6 633.1 355.6C635.0 355.6 635.6 352.6 636.8 352.6C638.9 354.0 637.8 356.7 639.8 360.1C641.0 362.1 641.5 363.5 643.2 363.5C645.3 363.3 645.0 360.0 647.4 359.3C649.2 359.3 650.7 361.0 651.5 361.0C653.2 357.7 652.5 355.6 653.2 350.1C654.5 339.5 653.8 339.4 655.4 328.9C656.0 325.2 655.9 323.9 657.6 321.8C658.2 321.8 659.5 321.9 660.1 323.0C662.0 326.3 661.7 326.7 662.6 330.6C664.7 340.3 663.8 340.5 666.1 350.1C667.0 354.0 666.9 354.5 669.1 357.6C670.1 359.1 670.8 359.3 672.5 359.3C673.9 359.3 674.1 357.6 675.3 357.6C677.0 358.1 676.7 360.9 678.4 361.0C680.2 361.0 680.1 358.5 682.2 357.9C683.8 357.9 684.1 358.9 685.9 358.9C688.0 358.8 688.0 358.4 690.1 357.6C691.6 357.1 692.5 356.3 693.0 356.3C694.6 360.6 694.0 362.4 694.6 368.5C695.5 376.9 694.7 377.0 696.0 385.3C696.7 389.6 696.6 390.7 698.5 393.6C699.1 393.6 700.5 393.6 701.0 392.8C703.0 388.1 701.9 387.2 703.5 381.9C704.4 378.8 704.1 376.9 706.0 376.0C707.5 376.0 707.9 377.8 710.2 378.6C712.1 379.1 712.3 378.8 714.4 379.1C717.4 379.6 717.8 380.2 720.3 380.2C722.8 379.4 722.1 377.8 724.5 376.0C727.1 374.0 728.6 375.3 730.3 372.7C732.7 369.0 730.9 367.6 732.8 363.5C733.4 362.2 734.1 361.8 735.4 361.8C737.5 362.3 737.5 363.5 739.6 365.1C741.9 366.8 742.1 368.5 744.2 368.5C746.3 368.2 745.6 365.0 747.9 364.0C749.6 364.0 751.0 365.1 752.1 365.1C754.3 362.7 753.8 361.0 754.6 356.8C755.7 351.0 755.0 350.8 756.0 345.0C757.2 338.5 757.0 338.4 759.0 332.2C760.2 328.3 760.2 328.0 762.4 324.7C763.4 323.2 763.9 322.5 765.4 322.5C767.2 322.6 767.6 325.0 769.1 325.0C771.1 324.2 771.3 322.6 772.4 319.7C775.0 312.8 774.4 312.5 776.6 305.4C778.6 298.7 778.4 298.6 780.8 292.0C782.2 288.1 782.4 288.2 784.2 284.5C785.7 281.5 786.3 281.7 787.5 278.6C788.8 275.4 787.6 274.7 789.2 271.9C790.1 270.3 791.9 271.5 792.6 269.7C794.9 263.9 794.1 263.3 795.1 256.8C796.2 249.3 795.4 249.1 796.7 241.7C797.5 237.2 797.5 237.0 799.3 233.0C799.7 232.2 800.6 232.1 801.0 232.1C802.7 235.2 802.3 236.3 803.5 240.5C804.8 245.1 803.7 246.6 806.0 249.7C807.0 249.7 808.2 249.4 810.2 249.4C812.8 249.9 812.7 251.0 815.3 251.4C816.9 251.4 818.0 251.4 818.6 250.6C820.3 245.7 819.1 244.7 820.3 238.9C821.2 234.6 820.9 233.8 822.8 230.5C823.4 230.5 824.8 230.5 825.3 230.5C827.3 234.5 826.4 235.5 827.8 240.5C829.0 244.7 828.2 245.5 830.4 248.9C831.5 250.6 833.3 248.9 834.5 250.6C836.6 253.7 836.3 254.4 837.0 258.5C838.8 269.3 837.9 269.5 839.5 280.3C840.4 286.6 839.9 287.9 842.0 292.8C842.4 292.8 843.9 292.8 844.5 292.0C846.4 288.5 845.6 287.8 847.0 283.6C847.9 280.9 848.2 278.3 849.1 278.3C850.5 279.3 849.7 283.0 851.6 287.0C852.9 289.8 853.5 291.5 855.4 292.0C856.7 292.0 857.5 290.6 857.9 288.6C860.0 278.1 859.3 277.8 860.5 266.9C861.9 253.7 861.4 253.7 863.0 240.5C863.9 232.9 863.8 232.7 865.6 225.4C865.9 224.3 866.6 223.8 867.2 223.8C869.1 225.8 869.0 227.1 870.6 230.5C872.3 234.2 873.2 238.0 873.9 238.0C875.6 233.2 874.6 227.5 875.6 217.1C876.7 205.3 876.1 205.2 878.1 193.6C878.6 190.5 879.4 187.7 880.6 187.7C881.9 187.9 882.0 191.0 883.2 194.4C885.0 199.4 884.2 200.4 886.5 204.5C887.1 204.5 888.1 204.5 889.0 204.5C891.0 203.1 890.7 202.4 892.4 200.3C893.6 198.8 894.3 197.4 894.9 197.4C896.8 200.6 895.9 203.1 897.4 208.7C898.8 213.8 898.6 215.9 900.8 218.7C901.5 218.7 902.1 217.5 903.3 216.2C904.5 214.9 904.6 213.4 905.5 213.4C907.1 214.5 907.8 219.6 908.3 219.6C909.6 214.8 909.1 210.0 909.6 200.3C910.2 187.7 909.6 187.7 910.5 175.1C910.9 169.2 910.5 166.7 912.2 163.4C912.9 163.4 914.4 164.3 915.9 165.9C917.5 167.7 917.9 167.7 918.4 170.1C920.0 178.2 919.2 178.5 920.0 186.9C920.9 196.1 920.2 196.4 921.7 205.3C921.9 206.5 922.6 207.0 923.4 207.0C924.7 206.6 924.9 204.0 925.9 204.0C927.4 204.8 926.7 207.9 928.4 209.5C929.2 209.5 929.8 209.4 930.9 208.7C932.1 208.0 932.3 206.7 933.0 206.7C934.4 207.8 934.2 209.3 935.1 212.0C936.5 216.2 935.4 216.8 937.6 220.4C939.2 223.1 940.1 222.5 942.7 224.6C944.8 226.3 944.5 227.5 946.9 228.0C949.5 228.0 949.8 227.3 952.7 226.8C956.0 226.2 956.0 225.9 959.4 225.8C961.9 225.8 962.4 225.8 964.5 226.3C966.6 227.4 966.4 230.1 967.8 230.1C969.8 229.4 969.9 227.1 971.2 223.8C973.1 219.2 972.4 216.3 974.2 214.2C974.9 214.2 975.2 216.1 976.2 217.9C977.4 220.0 977.8 222.1 978.7 222.1C980.3 220.8 980.3 218.0 981.2 213.7C982.8 206.2 981.6 205.5 983.7 198.6C984.1 197.4 985.0 197.4 986.3 197.4C987.9 197.4 987.9 198.2 989.6 198.6C991.3 199.0 991.8 199.1 993.0 199.1C994.8 197.8 994.3 194.4 995.5 194.4C996.8 194.5 996.1 197.8 998.0 199.5C999.4 200.3 1000.5 199.5 1002.2 200.3C1004.7 202.1 1005.2 205.3 1006.4 205.3C1008.5 203.2 1007.1 196.6 1008.9 193.9C1009.6 193.9 1009.8 196.1 1011.4 197.8C1013.2 199.7 1014.8 198.7 1015.6 201.1C1018.1 208.4 1016.8 209.1 1018.1 217.1C1019.3 224.6 1018.7 224.8 1020.6 232.1C1021.2 234.4 1021.4 235.2 1023.1 236.3C1024.1 236.3 1024.7 236.2 1026.0 235.5C1026.8 235.1 1026.9 234.2 1027.2 234.2C1028.6 237.5 1027.4 239.3 1029.3 243.4C1030.5 246.0 1031.6 245.3 1033.5 247.6C1035.6 250.2 1035.8 253.1 1037.2 253.1C1039.2 252.1 1038.2 248.3 1040.2 244.2C1040.9 242.7 1041.4 242.8 1042.7 241.8C1043.1 241.7 1043.3 241.7 1043.6 241.7C1045.0 243.1 1044.9 243.4 1046.1 245.1C1047.2 246.7 1047.4 248.4 1048.1 248.4C1049.5 246.7 1049.5 244.3 1050.3 240.1C1051.0 236.2 1050.4 236.1 1051.1 232.2C1052.1 226.3 1051.2 225.5 1053.6 220.5C1054.6 218.4 1055.9 218.0 1057.8 218.0C1060.0 218.5 1060.0 222.2 1061.7 222.2C1063.4 222.0 1063.6 219.8 1064.5 217.1C1066.3 211.4 1065.6 211.2 1067.1 205.4C1067.5 203.7 1068.0 202.1 1068.4 202.1C1069.7 205.3 1068.7 208.2 1070.4 213.8C1071.0 215.7 1071.2 216.3 1072.9 217.1C1074.6 217.1 1076.3 217.1 1077.1 217.1C1079.1 221.5 1078.5 223.0 1079.1 228.9C1080.0 237.8 1079.6 237.8 1080.0 246.8C1080.3 255.1 1080.4 255.1 1080.5 263.5C1080.8 281.9 1080.5 282.0 1080.8 300.4C1081.0 307.6 1080.8 307.8 1081.8 314.7C1082.1 316.2 1083.0 317.2 1083.8 317.2C1085.2 316.4 1085.7 314.8 1086.3 312.1C1087.8 304.8 1086.9 304.6 1088.0 297.1C1089.0 290.3 1088.5 290.0 1090.5 283.6C1091.0 282.0 1092.3 281.1 1093.0 281.1C1094.9 283.6 1093.5 286.2 1095.6 290.4C1096.9 292.9 1098.0 292.2 1099.7 294.5C1101.7 297.2 1101.8 297.3 1103.1 300.4C1105.2 305.3 1104.4 305.6 1106.5 310.5C1107.8 313.6 1108.7 316.3 1109.8 316.3C1111.4 315.3 1110.5 311.5 1112.0 307.1C1112.6 305.3 1112.9 303.8 1114.0 303.8C1115.6 304.1 1116.0 305.7 1117.4 308.0C1119.2 311.1 1118.5 314.0 1120.4 314.7C1121.8 314.7 1122.3 312.6 1124.1 310.5C1126.2 308.0 1126.7 308.2 1128.2 305.4C1130.0 301.9 1128.7 300.8 1130.8 297.9C1131.7 297.1 1133.6 297.9 1134.1 297.1C1136.1 290.6 1134.3 289.2 1136.1 282.0C1136.8 279.4 1137.5 277.4 1139.1 277.4C1140.7 277.4 1141.0 279.6 1142.5 282.0C1144.8 285.6 1143.8 286.9 1146.7 289.5C1148.4 290.4 1150.0 289.5 1151.7 290.4C1153.8 292.3 1152.4 293.8 1154.2 296.2C1155.4 297.8 1155.9 298.4 1157.6 298.4C1159.3 298.4 1159.3 297.4 1160.9 296.2C1162.0 295.3 1162.4 294.2 1163.0 294.2C1164.5 295.7 1164.5 297.2 1165.1 300.4C1166.4 307.0 1166.0 307.1 1166.8 313.8C1167.7 322.2 1167.7 322.2 1168.5 330.6C1168.9 334.6 1168.5 338.3 1169.2 338.6C1169.9 338.6 1170.0 335.1 1171.4 331.9C1172.0 330.6 1172.5 329.7 1173.1 329.7C1174.8 331.5 1174.2 336.6 1175.9 336.9C1177.5 336.9 1177.7 331.1 1179.8 330.7C1181.5 330.7 1182.5 335.3 1183.5 335.3C1185.1 333.9 1183.6 330.3 1185.1 326.0C1185.7 324.4 1186.2 323.7 1187.7 323.5C1189.2 323.5 1190.3 323.6 1191.0 325.2C1192.7 329.5 1191.0 331.2 1192.7 335.3C1193.6 336.9 1194.8 336.0 1196.9 336.9C1198.6 337.6 1199.5 337.0 1200.2 338.6C1203.0 344.4 1201.4 349.2 1203.9 351.7C1205.2 351.7 1205.6 348.7 1207.8 346.2C1209.2 344.5 1209.2 344.0 1211.1 343.3C1212.9 343.3 1214.0 343.6 1215.3 343.6C1217.3 342.0 1216.0 339.1 1217.8 337.8C1218.9 337.8 1220.4 337.9 1221.2 339.5C1223.8 345.0 1223.1 345.7 1224.5 352.0C1226.1 359.5 1225.4 359.7 1227.1 367.1C1227.5 368.9 1227.4 370.3 1228.7 370.5C1230.7 370.5 1232.2 370.1 1233.8 368.0C1236.0 365.0 1235.2 364.2 1236.3 360.4C1237.3 357.1 1236.5 356.4 1238.0 353.7C1238.6 352.9 1239.4 352.9 1240.5 352.9C1241.9 353.4 1242.3 355.4 1243.0 355.4C1244.8 353.3 1243.6 349.9 1245.5 347.0C1246.1 347.0 1247.1 347.0 1248.0 347.8C1249.6 349.4 1249.1 352.0 1250.5 352.0C1252.0 352.0 1252.0 348.3 1253.9 347.8C1255.4 347.8 1255.4 349.3 1257.2 350.4C1258.8 351.4 1259.5 350.6 1260.6 352.0C1262.5 354.4 1261.7 357.4 1263.1 357.9C1264.2 357.9 1264.9 356.0 1265.6 353.7C1267.4 348.1 1266.3 347.6 1268.1 342.0C1268.8 340.0 1269.2 338.6 1270.6 338.6C1272.2 338.6 1272.6 340.1 1274.0 342.0C1276.0 344.7 1275.4 345.1 1277.4 347.8C1278.8 349.7 1279.0 351.2 1280.7 351.2C1282.8 351.0 1283.1 349.3 1284.9 347.0C1287.3 343.9 1287.8 344.0 1289.1 340.3C1291.5 333.5 1290.1 332.9 1292.4 326.0C1293.1 323.9 1293.4 322.8 1295.0 322.4C1296.4 322.4 1296.8 323.2 1298.3 324.4C1300.6 326.3 1300.3 326.6 1302.5 328.6C1304.5 330.4 1304.5 330.4 1306.7 331.9C1308.7 333.3 1309.5 332.5 1310.9 334.4C1313.3 337.6 1312.5 338.2 1314.2 342.0C1316.3 346.6 1315.9 346.8 1318.4 351.2C1319.7 353.5 1320.7 355.4 1321.8 355.4C1323.5 354.1 1322.9 351.2 1324.0 347.0C1325.0 342.8 1324.6 339.9 1326.0 338.6C1326.8 338.6 1327.0 342.3 1328.5 342.8C1329.5 342.8 1329.7 341.4 1331.0 340.3C1332.2 339.3 1332.5 338.6 1333.5 338.6C1335.0 339.1 1334.4 340.6 1336.0 342.0C1337.8 343.6 1338.1 343.3 1340.2 344.5C1341.9 345.4 1341.9 346.2 1343.6 346.2C1345.3 346.2 1345.4 344.5 1346.9 344.5C1348.8 344.9 1348.5 347.8 1350.3 347.8C1352.3 347.8 1352.8 346.5 1354.5 344.5C1356.4 342.2 1355.9 339.3 1357.5 339.1C1358.8 339.1 1359.0 341.3 1360.3 343.6C1362.1 346.9 1361.8 349.9 1363.7 350.4C1365.2 350.4 1366.4 348.2 1367.0 345.3C1369.3 334.8 1367.9 334.3 1369.6 323.5C1370.0 321.3 1369.8 320.0 1371.2 319.3C1372.3 319.3 1372.8 320.8 1374.6 321.0C1377.0 321.0 1377.1 320.7 1379.6 320.2C1381.7 319.8 1381.8 319.3 1383.8 319.3C1386.4 319.8 1387.0 319.9 1388.8 321.9C1391.2 324.6 1389.9 325.8 1392.2 328.6C1393.3 330.0 1393.8 330.0 1395.5 330.2C1397.5 330.2 1397.7 329.4 1399.7 329.4C1401.9 329.9 1401.9 330.5 1403.9 331.9C1405.2 332.8 1405.9 333.9 1406.4 333.9C1408.0 330.7 1406.8 328.5 1408.1 323.5C1408.5 321.9 1408.5 321.2 1409.8 320.7C1411.5 320.7 1412.0 320.8 1414.1 321.3C1416.6 321.8 1416.6 322.3 1419.1 322.7C1421.6 322.7 1421.9 322.7 1424.2 322.7C1426.1 323.3 1426.1 323.7 1427.5 325.2C1429.5 327.4 1429.3 327.6 1430.9 330.2C1432.7 333.1 1432.0 333.9 1434.2 336.1C1435.3 336.9 1436.2 336.9 1437.6 336.9C1439.6 336.1 1439.2 333.3 1440.9 333.3C1442.6 333.3 1442.4 335.3 1444.3 336.9C1445.8 338.2 1446.2 337.7 1447.6 339.1C1449.5 340.9 1449.0 342.4 1451.0 343.3C1452.4 343.3 1453.6 343.3 1454.4 342.0C1456.6 337.8 1455.0 336.5 1456.9 331.9C1457.5 330.6 1458.2 330.2 1459.4 330.2C1461.1 330.4 1461.6 331.0 1462.7 332.7C1464.9 336.1 1464.6 336.4 1466.1 340.3C1467.5 344.0 1467.8 343.9 1468.6 347.8C1469.9 354.0 1469.6 354.1 1470.3 360.4C1471.3 370.4 1470.9 370.5 1472.0 380.5C1472.6 385.6 1472.5 385.6 1473.6 390.6C1474.4 394.1 1475.9 397.5 1475.9 397.5" fill="none" stroke="#1ec683" stroke-width="1.25" stroke-linejoin="round"/>
<path d="M94.2 305.3C94.2 305.3 97.8 309.5 100.9 310.4C102.0 310.4 102.3 309.3 102.6 307.8C105.3 294.2 103.8 293.7 106.8 280.2C108.0 274.9 108.1 272.9 111.0 270.1C112.2 270.1 113.6 272.3 115.1 272.3C117.3 271.2 117.4 266.3 118.5 266.3C119.9 267.1 119.8 270.6 120.2 275.1C121.5 288.9 120.2 289.2 121.9 302.8C122.4 306.4 124.0 306.0 125.2 309.5C127.3 315.8 126.2 320.4 128.6 322.4C130.0 322.4 130.0 318.2 132.7 315.7C134.2 314.5 135.3 314.5 136.9 314.5C138.7 315.3 138.7 316.4 139.5 318.7C141.7 325.4 140.9 331.5 142.8 332.5C144.3 332.5 145.3 327.5 146.2 322.1C148.4 308.9 147.2 307.7 149.0 295.3C149.1 295.3 149.9 295.5 150.0 296.1C151.8 303.8 151.4 312.0 152.9 312.0C154.7 310.8 154.6 296.0 156.6 291.9C157.5 291.9 157.8 296.1 158.7 300.3C161.2 312.3 160.3 318.9 163.3 324.3C164.5 324.3 164.8 319.6 167.1 315.4C168.8 312.2 170.0 309.5 171.3 309.5C173.3 310.9 172.4 320.1 173.8 320.1C175.3 319.9 174.5 311.6 177.2 308.7C178.3 308.7 179.1 311.2 181.4 311.7C183.3 311.7 184.5 310.7 185.6 310.7C188.3 314.1 187.1 316.0 188.9 321.2C190.0 324.2 190.4 324.1 191.4 327.1C193.4 333.3 192.4 336.7 194.8 339.7C195.8 339.7 197.3 338.0 198.1 335.5C201.0 326.7 199.3 325.9 202.3 317.1C203.1 314.7 204.4 313.2 205.7 313.2C207.2 313.6 207.6 315.8 207.9 318.7C209.6 334.5 208.4 334.7 209.7 350.6C210.2 356.6 209.7 358.0 211.5 362.6C212.3 363.1 215.0 362.6 215.7 363.1C218.8 370.6 216.7 376.9 219.1 381.0C220.0 381.0 220.6 376.1 222.4 374.6C223.1 374.6 223.7 375.5 224.1 376.8C226.6 384.5 225.2 385.7 228.3 392.7C229.0 393.9 230.0 393.9 231.7 393.9C234.6 393.9 235.0 393.9 237.5 392.7C239.1 391.9 239.0 389.7 240.0 389.7C241.9 390.8 242.3 396.1 243.4 396.1C245.7 393.0 244.3 383.5 246.7 380.7C247.9 380.7 248.7 387.4 250.6 387.7C252.1 387.7 251.5 381.9 253.5 381.9C256.7 382.4 258.2 389.4 261.0 389.4C263.8 388.9 262.9 379.9 264.7 379.7C266.3 379.7 265.3 388.4 267.7 388.6C270.5 388.6 272.3 380.7 275.2 380.7C277.8 381.0 277.1 389.7 278.6 389.7C280.9 388.0 280.1 382.1 282.8 375.1C283.7 372.6 285.1 370.6 285.8 370.6C287.5 373.6 286.8 377.0 287.5 383.5C288.7 395.2 287.5 395.7 289.5 407.0C289.8 408.7 291.5 407.8 292.0 409.5C294.5 417.9 292.7 418.7 295.4 427.1C296.5 430.5 297.7 429.9 299.6 433.0C301.8 436.6 301.2 437.2 303.7 440.5C304.8 441.8 306.4 442.2 306.8 442.2C308.4 436.0 307.7 433.8 308.4 425.4C309.2 416.2 309.2 407.0 309.9 407.0C310.6 407.0 310.5 416.2 311.3 425.4C312.4 438.0 311.6 440.1 313.8 450.6C314.1 450.6 315.6 450.2 316.3 448.9C318.7 444.9 317.7 441.6 320.0 440.1C321.3 440.1 322.0 442.0 323.4 444.3C325.5 447.7 325.2 451.5 327.0 451.5C328.7 451.5 328.7 445.6 330.4 444.3C331.2 444.3 331.8 445.8 332.1 447.7C333.7 458.8 332.8 459.1 334.2 470.3C335.1 477.5 334.7 481.7 336.8 484.5C337.8 484.5 338.2 480.0 340.5 478.7C341.9 478.7 342.8 479.0 344.3 480.4C346.4 482.4 346.1 485.4 347.7 485.4C349.9 484.9 349.3 481.6 351.9 478.7C353.1 477.4 354.0 477.0 355.2 477.0C357.3 478.2 356.8 482.2 358.6 482.4C360.2 482.4 359.9 479.6 361.9 477.8C363.4 476.5 364.9 477.8 365.6 476.2C368.2 470.2 366.7 465.0 368.6 462.4C369.5 462.4 369.4 465.8 371.1 468.6C372.8 471.4 372.8 473.2 375.3 473.6C377.9 473.6 379.2 472.8 381.2 470.3C383.8 467.0 382.4 465.8 384.5 461.9C385.3 460.3 385.8 459.4 387.1 459.4C388.8 459.6 389.1 460.8 390.4 462.7C392.0 465.0 391.0 465.9 392.9 467.8C394.4 469.3 396.1 467.8 397.1 469.5C399.9 474.8 398.2 476.0 400.5 482.0C402.4 486.8 402.2 487.9 405.5 491.2C406.8 491.2 408.4 491.2 409.7 491.2C411.7 489.5 411.0 488.3 412.2 485.4C413.2 483.1 413.5 480.7 414.2 480.7C416.0 483.4 414.7 488.9 417.2 492.9C417.9 492.9 418.8 491.5 420.6 491.2C423.8 491.2 425.2 491.2 427.3 491.2C429.8 493.3 428.9 494.9 429.8 498.8C430.5 501.8 430.2 501.9 430.5 505.0C431.3 512.5 430.5 512.9 432.0 520.0C432.6 522.4 433.8 521.8 435.0 524.0C437.1 528.0 437.7 532.3 438.6 532.3C441.1 526.6 439.9 510.0 441.9 508.4C443.4 508.4 442.9 525.8 445.7 526.5C448.2 526.5 448.8 514.4 452.5 511.0C454.0 511.0 454.1 516.4 456.0 517.0C457.4 517.0 457.3 513.0 459.0 513.0C462.3 513.8 462.1 518.0 466.0 519.5C468.6 519.5 469.2 519.2 472.0 518.0C474.7 516.9 474.6 515.0 477.0 515.0C480.1 515.4 481.2 519.5 483.0 519.5C485.4 518.1 484.5 514.8 485.5 510.0C486.1 506.9 485.6 506.8 486.3 503.8C487.5 498.7 486.7 496.0 489.3 493.8C490.8 493.8 491.9 496.6 494.4 496.8C496.1 496.8 496.2 495.9 497.7 494.6C499.6 492.9 499.4 490.9 501.1 490.7C502.6 490.7 502.3 493.3 504.1 493.8C506.4 493.8 506.7 493.1 509.4 492.9C512.3 492.9 513.0 492.9 515.3 492.9C517.7 491.6 516.4 489.3 518.7 487.9C520.6 487.9 521.5 487.9 523.7 487.9C526.5 489.1 525.9 491.4 528.7 492.1C530.9 492.1 531.1 490.6 533.7 490.4C536.6 490.4 538.3 491.2 539.6 491.2C541.6 487.2 541.1 485.0 541.6 478.7C542.5 466.2 541.6 466.0 542.5 453.5C543.2 444.5 544.0 444.6 545.1 435.6C546.4 425.5 546.2 425.5 547.3 415.4C548.1 408.3 547.5 408.0 548.9 401.2C549.1 400.1 550.0 399.5 550.5 399.5C552.3 401.8 551.4 403.7 553.5 407.1C554.6 408.8 556.3 409.6 556.8 409.6C558.8 404.2 557.5 401.5 558.8 393.6C559.3 390.6 559.5 387.8 560.5 387.8C561.8 388.3 561.9 391.6 563.5 395.3C565.1 399.1 564.6 399.6 566.9 402.9C568.4 405.0 569.5 404.1 571.1 406.2C573.0 408.7 572.0 411.7 573.9 412.1C575.7 412.1 576.1 409.8 578.6 407.9C580.2 406.7 580.2 406.4 582.0 405.9C584.4 405.4 585.6 405.9 587.0 405.4C589.5 402.6 588.6 401.2 589.8 397.0C590.9 393.1 591.0 389.1 591.7 389.1C593.0 391.3 591.7 397.1 593.7 403.7C594.3 405.5 595.3 405.8 597.1 405.9C599.1 405.9 599.3 405.3 601.2 404.2C603.4 402.9 604.2 403.3 605.4 401.2C607.6 397.2 606.0 396.2 608.0 392.0C609.3 389.3 610.0 387.6 612.1 387.4C613.8 387.4 614.6 388.8 615.5 391.1C617.5 396.1 615.9 397.0 618.0 402.0C618.9 404.1 619.4 404.8 621.4 405.4C623.6 405.4 624.9 405.4 626.4 404.5C628.7 401.9 626.8 399.3 628.9 397.0C629.9 397.0 630.8 397.8 632.6 397.8C634.6 397.7 635.6 396.5 636.5 396.5C638.1 399.1 637.4 400.9 638.1 405.4C639.2 412.1 638.3 417.3 640.1 418.8C641.3 418.8 641.7 414.4 644.0 410.4C645.3 408.1 645.4 406.9 647.4 406.2C648.9 406.2 650.1 407.9 651.0 407.9C653.0 405.3 652.6 403.4 653.2 398.7C654.5 388.7 653.3 388.5 654.9 378.6C655.5 374.6 655.9 372.0 657.7 371.0C658.9 371.0 659.9 372.8 660.8 375.2C663.1 381.6 662.1 382.0 664.1 388.6C665.8 394.2 665.8 394.2 668.3 399.5C669.6 402.4 669.4 403.7 671.7 404.9C673.6 404.9 674.5 403.7 676.7 403.7C679.5 404.5 678.8 407.2 681.7 407.9C684.7 407.9 686.3 406.6 688.4 406.6C691.3 408.8 690.3 410.9 691.8 415.4C694.1 422.1 693.9 422.1 696.0 428.9C697.9 435.1 698.5 441.4 699.7 441.4C701.4 439.9 700.0 432.4 701.8 423.8C702.7 419.4 702.7 416.9 705.2 415.4C706.9 415.4 707.5 417.8 710.2 418.8C712.1 418.8 712.4 418.8 714.4 418.8C717.0 418.3 717.8 418.8 719.4 417.1C722.0 414.3 720.4 412.4 722.8 409.6C723.8 409.2 725.1 409.2 726.1 409.2C728.5 411.6 727.9 412.7 729.5 416.3C730.4 418.4 730.8 420.5 731.2 420.5C732.9 414.7 731.4 410.8 733.7 402.0C734.3 399.5 735.8 397.8 737.0 397.8C739.2 399.5 737.9 403.3 740.4 407.1C741.3 407.9 742.5 407.9 743.7 407.9C746.7 405.8 746.0 402.6 748.8 401.2C750.2 401.2 751.2 403.7 752.1 403.7C754.5 401.0 754.5 398.8 755.5 393.6C757.8 382.1 757.0 381.9 758.8 370.2C759.9 363.5 759.1 362.9 761.3 356.8C762.0 354.9 762.8 354.4 764.7 354.2C767.0 354.2 767.8 355.9 769.7 355.9C773.2 354.0 772.9 352.3 775.6 348.4C776.6 346.9 776.7 346.8 777.1 345.0C778.5 337.9 778.1 337.8 779.1 330.6C780.4 320.5 780.1 320.4 781.7 310.4C782.6 304.5 782.7 304.5 784.2 298.7C785.6 293.6 785.5 293.5 787.5 288.6C788.9 285.1 789.1 285.2 790.9 281.9C792.1 279.8 792.8 280.0 793.4 277.7C794.9 271.7 794.0 271.4 795.1 265.2C795.7 261.8 795.1 261.0 796.7 258.5C797.9 256.8 799.1 256.8 800.9 256.8C802.5 257.2 802.8 258.2 803.5 260.1C805.3 264.9 804.5 265.2 806.0 270.2C806.5 272.0 806.9 273.6 807.6 273.6C809.0 272.2 808.2 269.4 810.2 266.0C811.6 263.5 812.1 263.6 814.4 261.8C815.8 260.7 816.9 261.6 817.7 260.1C819.4 256.6 818.4 255.9 819.4 251.8C820.3 248.2 820.3 244.8 821.4 244.6C822.4 244.6 821.8 248.4 823.6 250.9C825.0 252.8 825.6 253.2 827.8 253.4C830.2 253.4 831.4 251.8 832.8 251.8C835.1 253.9 834.5 255.9 835.3 260.1C837.0 269.3 836.5 269.4 837.8 278.6C839.0 287.8 838.4 288.0 840.3 297.0C840.9 299.8 841.9 302.1 842.8 302.1C844.5 300.5 844.7 297.2 845.4 292.0C847.0 280.4 845.9 280.2 847.4 268.5C847.8 265.3 848.4 262.3 849.1 262.3C850.1 263.0 849.7 266.7 850.9 271.0C851.6 273.4 851.8 275.7 852.9 275.7C854.0 275.7 854.7 273.5 855.4 271.0C857.2 264.1 856.9 263.9 857.9 256.8C859.1 247.9 858.3 247.7 859.7 238.9C860.4 234.6 861.5 234.8 862.2 230.5C863.6 222.2 863.0 222.1 863.9 213.7C864.7 206.6 863.9 206.1 865.6 199.5C866.0 198.1 866.9 197.8 868.1 197.8C869.8 198.0 869.6 199.6 871.4 200.3C872.7 200.3 874.0 200.3 874.3 200.3C875.6 191.5 874.9 190.2 875.6 180.2C877.0 161.8 876.3 161.7 878.5 143.5C878.9 140.2 879.9 137.3 880.7 137.3C882.0 138.9 881.9 142.9 882.7 148.5C884.1 158.5 883.0 158.8 885.2 168.6C886.3 173.5 886.7 174.2 889.4 177.9C890.1 177.9 891.1 177.9 891.9 177.9C893.9 176.0 893.9 172.5 894.9 172.5C896.4 173.8 896.2 177.3 896.9 182.1C898.3 192.1 897.9 192.2 899.1 202.2C900.2 211.0 900.6 219.8 901.5 219.8C902.7 217.9 901.9 207.6 903.3 195.5C903.7 192.1 904.1 188.8 905.0 188.8C905.9 188.8 906.1 192.1 907.0 195.5C907.9 198.8 908.5 202.2 908.7 202.2C909.5 189.5 909.0 183.7 909.5 165.3C909.9 149.3 909.5 149.3 910.4 133.4C910.5 131.1 911.0 128.9 911.7 128.9C912.6 129.1 912.2 132.1 913.7 134.3C914.4 135.4 914.9 135.1 916.2 135.5C917.6 135.9 918.8 135.5 919.1 136.0C920.7 142.9 920.2 143.9 920.7 151.9C921.7 167.0 921.1 177.8 922.1 182.1C922.7 182.1 922.6 173.6 923.8 165.3C924.4 160.9 924.9 156.6 925.8 156.6C926.7 156.6 926.2 161.1 927.5 165.3C928.1 167.1 928.1 167.7 929.6 168.6C930.9 168.6 932.4 168.6 933.0 168.6C934.7 172.4 933.7 173.7 934.7 178.7C935.3 181.7 934.7 183.0 936.3 184.6C937.2 184.6 938.0 184.2 939.7 183.7C941.4 183.1 942.0 182.4 943.0 182.4C944.9 184.1 943.9 185.9 945.6 188.8C946.5 190.3 946.9 191.3 948.1 191.3C949.4 191.3 950.0 190.4 950.6 188.8C952.3 184.1 951.4 183.7 952.6 178.7C953.1 176.8 953.5 175.0 953.9 175.0C955.0 177.4 954.6 180.2 955.6 185.4C956.3 188.8 955.6 189.7 957.3 192.1C958.1 192.5 959.2 192.1 960.6 192.5C962.8 193.8 962.6 196.2 964.5 196.3C966.0 196.3 965.5 193.9 967.4 193.0C969.9 192.1 970.6 193.0 973.2 192.1C975.6 191.1 976.1 191.0 977.4 188.8C979.9 184.3 980.0 183.9 980.8 178.7C983.0 163.8 981.5 163.5 983.3 148.5C983.6 146.0 983.8 144.0 985.0 143.8C986.3 143.8 987.0 145.5 988.3 147.7C990.4 151.2 990.2 151.4 991.7 155.2C993.5 159.8 992.7 160.3 995.0 164.5C996.4 167.2 998.0 169.0 999.2 169.0C1000.9 167.8 999.4 164.3 1000.9 160.3C1001.5 158.7 1002.0 157.9 1003.4 157.7C1004.9 157.7 1006.1 157.8 1006.7 159.4C1008.4 164.1 1006.8 165.4 1008.4 170.3C1008.9 171.7 1009.5 171.6 1010.9 172.0C1012.8 172.0 1014.1 172.0 1015.1 172.0C1017.5 175.6 1016.8 177.0 1017.6 182.1C1018.9 190.4 1017.9 190.6 1019.3 198.8C1020.0 203.1 1019.6 203.7 1021.8 207.2C1023.4 209.6 1025.5 208.1 1026.9 210.6C1028.5 214.0 1028.1 214.7 1028.5 218.9C1029.6 230.5 1028.8 239.8 1029.8 242.3C1030.5 242.3 1030.0 234.3 1031.9 227.2C1032.3 225.5 1033.0 224.9 1034.4 224.7C1035.9 224.7 1037.0 226.4 1037.7 226.4C1039.9 222.2 1038.8 220.1 1040.2 213.8C1041.3 208.7 1040.9 208.3 1042.7 203.7C1043.0 202.9 1044.0 202.9 1044.4 202.9C1045.9 204.9 1045.2 206.0 1046.6 208.8C1047.3 210.2 1048.3 211.3 1048.6 211.3C1050.2 204.9 1049.2 202.5 1050.3 193.7C1051.5 184.0 1050.9 183.8 1053.3 174.4C1054.3 170.6 1054.6 168.7 1057.0 167.4C1058.5 167.4 1059.1 170.1 1061.2 170.2C1062.9 170.2 1063.8 169.6 1064.5 167.7C1066.8 161.2 1065.7 160.5 1067.1 153.4C1067.8 149.9 1068.2 146.4 1068.7 146.4C1069.9 150.0 1069.4 155.0 1070.4 163.5C1071.1 169.4 1071.0 173.9 1072.1 175.2C1072.8 175.2 1072.7 171.2 1074.1 167.7C1074.5 166.6 1075.3 166.0 1075.8 166.0C1077.3 168.3 1077.5 169.7 1078.0 173.6C1079.4 183.5 1079.0 183.6 1079.6 193.7C1080.6 210.4 1080.5 210.4 1081.3 227.2C1081.7 235.3 1081.4 235.3 1082.1 243.4C1082.6 249.3 1082.5 249.4 1083.8 255.1C1084.3 257.3 1085.6 259.3 1085.8 259.3C1087.7 244.7 1086.4 240.7 1088.0 222.2C1088.8 212.9 1088.5 212.7 1090.5 203.7C1091.0 201.3 1091.9 199.5 1093.0 199.5C1094.5 200.0 1094.8 202.3 1095.6 205.4C1097.8 214.5 1096.9 214.7 1098.9 223.9C1100.3 230.2 1100.4 230.2 1102.3 236.4C1104.2 242.9 1104.0 246.1 1106.5 249.3C1107.4 249.3 1108.3 247.4 1109.0 245.1C1110.8 239.7 1109.5 239.1 1111.5 233.9C1112.3 231.9 1112.7 231.0 1114.5 230.6C1116.1 230.6 1117.3 230.6 1118.2 232.2C1120.4 236.4 1119.2 237.3 1120.7 242.3C1122.2 247.1 1122.0 249.6 1124.1 251.8C1125.0 251.8 1125.7 250.3 1126.6 248.4C1128.6 244.0 1128.2 243.8 1129.9 239.2C1130.3 238.2 1130.1 238.1 1130.8 237.3C1132.2 235.8 1133.5 236.6 1134.1 234.7C1136.1 227.4 1134.8 226.7 1136.1 218.8C1136.9 214.4 1136.6 211.4 1138.3 210.1C1139.4 210.1 1140.8 212.0 1141.7 214.6C1144.2 222.2 1143.0 222.7 1145.0 230.6C1146.3 235.7 1146.9 235.5 1148.4 240.6C1149.9 245.7 1148.9 248.6 1150.9 251.0C1151.8 251.0 1152.4 249.2 1154.2 247.6C1156.6 245.4 1156.8 245.6 1159.3 243.4C1161.0 241.9 1161.5 240.3 1162.6 240.3C1164.2 241.3 1164.2 243.4 1164.6 246.8C1165.9 259.2 1165.3 259.4 1166.0 271.9C1166.8 284.5 1166.7 284.5 1167.6 297.1C1168.2 305.5 1167.8 309.4 1169.0 313.8C1169.4 313.8 1170.2 311.4 1170.7 308.8C1171.6 303.8 1170.7 303.5 1171.8 298.7C1172.1 297.6 1173.2 297.1 1173.5 297.1C1175.1 301.3 1174.3 303.1 1175.7 308.8C1176.0 309.8 1176.7 310.5 1176.9 310.5C1178.1 307.0 1177.3 305.3 1178.5 300.4C1178.9 298.6 1179.1 297.3 1180.2 297.1C1181.2 297.1 1181.3 299.1 1182.7 299.6C1183.4 299.6 1184.2 299.6 1184.4 298.7C1185.8 291.6 1184.5 291.0 1185.8 283.6C1186.2 281.2 1186.5 279.6 1187.8 279.1C1188.8 279.1 1189.8 280.2 1190.3 282.0C1191.9 287.5 1190.6 288.0 1192.0 293.7C1192.7 296.4 1192.7 296.9 1194.5 298.7C1195.6 299.6 1197.0 298.7 1197.8 299.6C1199.5 302.5 1198.9 303.3 1199.5 307.1C1200.6 313.8 1200.2 313.8 1201.2 320.5C1202.2 327.5 1201.7 330.3 1203.6 334.4C1204.2 334.4 1204.8 332.7 1206.1 331.1C1207.0 330.0 1207.5 328.9 1208.1 328.9C1209.6 330.7 1209.0 332.6 1210.3 336.1C1211.8 340.4 1211.9 343.8 1213.6 344.5C1214.8 344.5 1214.9 341.5 1216.2 338.6C1217.2 336.5 1217.3 334.4 1218.2 334.4C1219.4 334.9 1219.8 337.2 1220.4 340.3C1222.1 348.6 1221.5 348.7 1222.9 357.1C1224.0 363.8 1223.7 363.9 1225.4 370.5C1226.2 373.8 1225.8 375.0 1227.9 376.8C1229.2 376.8 1230.3 376.8 1232.1 376.3C1234.1 375.3 1234.5 375.1 1235.4 373.0C1237.2 368.8 1236.6 368.4 1237.5 363.8C1238.4 359.2 1237.6 358.3 1239.1 354.5C1239.5 354.5 1240.4 354.5 1241.3 354.5C1242.5 353.9 1242.7 353.7 1243.3 352.4C1244.8 349.3 1243.7 347.3 1245.5 345.7C1246.5 345.7 1247.2 347.5 1248.9 347.5C1251.0 347.3 1251.3 345.0 1253.0 345.0C1254.7 345.4 1253.8 347.8 1255.6 349.0C1257.2 349.5 1258.8 349.0 1259.7 349.5C1261.4 352.9 1260.7 354.1 1261.4 358.7C1262.5 365.8 1262.2 371.5 1263.4 373.0C1264.2 373.0 1264.8 368.5 1265.3 363.8C1266.7 351.3 1266.0 351.2 1267.3 338.6C1267.9 333.1 1267.5 332.7 1269.0 327.7C1269.3 326.6 1270.4 326.5 1271.0 326.5C1272.7 328.4 1272.8 329.5 1273.7 332.7C1275.3 338.5 1273.9 339.5 1276.0 344.5C1276.5 345.3 1277.6 345.3 1279.0 345.3C1281.7 344.5 1282.0 344.1 1284.1 342.0C1286.1 339.9 1286.4 339.7 1287.1 336.9C1288.9 329.7 1287.9 329.4 1289.1 321.9C1289.9 316.8 1289.2 316.2 1291.1 311.8C1291.7 310.3 1292.6 310.1 1294.1 310.1C1295.4 310.1 1296.1 310.4 1296.6 311.8C1298.5 317.1 1297.8 317.6 1298.8 323.5C1299.9 330.2 1299.2 330.6 1300.8 336.9C1301.0 337.8 1301.8 337.8 1302.5 337.8C1304.3 336.9 1304.6 334.4 1305.9 334.4C1307.6 335.1 1307.5 337.2 1308.4 340.3C1310.0 345.6 1309.0 346.2 1310.9 351.2C1311.5 352.7 1311.9 352.8 1313.4 353.4C1314.8 353.7 1316.2 353.4 1316.7 353.7C1318.4 358.4 1317.2 359.7 1318.4 365.4C1318.9 367.6 1318.7 368.6 1320.1 369.6C1321.2 369.6 1323.1 369.6 1323.5 368.8C1325.1 361.9 1323.5 359.9 1325.1 352.9C1325.6 351.7 1326.8 352.2 1328.5 351.7C1329.7 351.3 1330.0 351.7 1331.0 351.2C1332.5 350.2 1332.4 348.3 1333.5 348.3C1334.9 348.8 1334.4 350.8 1336.0 352.9C1337.8 355.2 1338.1 355.0 1340.2 357.1C1341.9 358.8 1341.8 360.4 1343.6 360.4C1345.6 360.4 1345.6 358.5 1347.8 357.1C1349.8 355.8 1349.8 355.2 1352.0 355.0C1354.4 355.0 1354.9 356.2 1357.0 356.2C1359.0 355.6 1358.3 353.4 1360.3 352.5C1362.0 352.5 1363.0 352.9 1364.5 352.9C1366.8 351.2 1366.9 350.2 1367.9 347.0C1369.8 341.2 1367.9 339.8 1370.4 334.9C1371.3 333.9 1372.6 334.7 1374.6 333.9C1376.4 333.2 1376.9 333.5 1377.9 331.9C1380.2 328.3 1379.7 327.7 1381.3 323.5C1382.7 319.8 1382.3 319.6 1383.8 316.0C1384.4 314.6 1384.9 313.5 1385.5 313.5C1386.6 314.3 1386.6 315.9 1387.2 318.5C1388.7 325.1 1387.5 325.6 1389.7 331.9C1390.9 335.2 1391.3 335.7 1393.9 337.8C1395.5 338.6 1396.4 338.6 1398.1 338.6C1400.2 337.7 1399.5 335.2 1401.4 334.4C1402.4 334.4 1402.7 335.2 1403.9 336.1C1405.2 337.0 1406.1 337.8 1406.4 337.8C1407.4 332.6 1406.7 330.6 1407.4 323.5C1408.1 316.8 1407.4 316.3 1409.1 310.1C1409.7 308.0 1410.7 307.0 1412.4 306.8C1413.7 306.8 1413.8 307.9 1415.0 309.3C1416.8 311.3 1416.2 312.9 1418.3 313.5C1420.4 313.5 1421.1 311.8 1423.3 311.8C1425.3 312.2 1425.5 313.1 1426.7 315.1C1428.5 318.2 1428.4 318.4 1429.2 321.9C1430.5 327.6 1430.2 327.7 1430.9 333.6C1431.7 341.1 1431.4 341.2 1432.2 348.7C1432.6 352.5 1432.4 354.4 1433.4 356.2C1433.8 356.2 1434.1 354.8 1435.1 353.7C1436.2 352.5 1436.4 351.7 1437.6 351.7C1439.3 351.9 1439.0 353.9 1440.9 354.5C1443.2 354.5 1444.1 354.5 1446.0 354.5C1447.9 355.5 1447.8 356.4 1448.5 358.7C1450.3 364.8 1449.6 370.3 1451.0 371.3C1452.1 371.3 1452.5 366.8 1453.5 362.1C1455.0 355.5 1454.0 355.0 1456.0 348.7C1456.5 347.1 1457.1 346.4 1458.5 346.2C1459.7 346.2 1460.6 346.5 1461.1 347.8C1463.1 352.7 1462.5 353.2 1463.6 358.7C1464.6 363.7 1464.2 363.8 1465.2 368.8C1466.3 373.9 1466.6 373.8 1467.8 378.9C1469.2 384.7 1469.3 384.7 1470.3 390.6C1471.8 399.0 1471.8 399.0 1472.8 407.4C1474.6 422.2 1475.9 437.0 1475.9 437.0" fill="none" stroke="#ebbe4f" stroke-width="1.25" stroke-linejoin="round"/>
<text x="1462.7" y="528.2" font-size="20" fill="#9da0a4" text-anchor="end" font-weight="700" >coinglass</text>
<line x1="92" x2="1472" y1="400.8" y2="400.8" stroke="#d4d5d6" stroke-width="1.4" stroke-dasharray="4.3 2.416"/>
<line x1="1476" x2="1476" y1="109" y2="550" stroke="#9c9ea1" stroke-width="1.9" stroke-dasharray="4.3 2.428"/>
<rect x="33" y="388" width="56" height="24.6" rx="4" fill="#000"/>
<text x="41.2" y="403.9" font-size="13" fill="#fff" text-anchor="start" font-weight="400" stroke="#fff" stroke-width="0.55" stroke-linejoin="round" textLength="40" lengthAdjust="spacingAndGlyphs" >27.17B</text>
<rect x="1481" y="388.2" width="70" height="25" rx="3.8" fill="#000"/>
<text x="1489" y="403.9" font-size="13" fill="#fff" text-anchor="start" font-weight="400" stroke="#fff" stroke-width="0.55" stroke-linejoin="round" textLength="49" lengthAdjust="spacingAndGlyphs" >2,573.64</text>
<circle cx="1475.7" cy="397.3" r="4.55" fill="#fff" stroke="#1ec683" stroke-width="1.8"/>
<circle cx="1475.7" cy="437" r="4.6" fill="#fff" stroke="#ebbe4f" stroke-width="2"/>
<clipPath id="sel"><rect x="1225.2" y="572.4" width="254.8" height="65.6"/></clipPath>
<path d="M95.0 625.0L96.4 625.0L97.9 625.1L99.3 625.5L100.7 625.3L102.1 625.7L103.6 625.8L105.0 626.0L106.4 625.7L107.8 625.9L109.2 625.7L110.7 625.8L112.1 625.6L113.5 625.6L114.9 625.7L116.3 625.9L117.7 625.5L119.2 625.5L120.6 625.7L122.0 625.8L123.4 625.6L124.8 625.5L126.2 625.7L127.6 625.2L129.1 625.6L130.5 625.3L131.9 625.1L133.3 625.3L134.7 625.1L136.1 625.2L137.5 625.4L138.9 625.1L140.3 625.3L141.7 625.3L143.1 625.1L144.5 625.2L145.9 624.9L147.4 624.9L148.8 625.0L150.2 625.2L151.6 625.1L153.0 625.0L154.4 625.1L155.8 625.0L157.2 624.9L158.6 625.2L160.0 625.1L161.4 624.8L162.8 625.0L164.2 625.0L165.6 625.1L167.0 625.0L168.4 624.8L169.8 625.2L171.2 624.7L172.6 624.8L174.1 625.0L175.5 624.6L176.9 624.8L178.3 624.5L179.7 624.9L181.1 624.9L182.5 624.8L183.9 624.9L185.3 624.6L186.7 624.7L188.2 624.7L189.7 624.4L191.1 624.3L192.6 624.1L194.1 624.1L195.6 624.0L197.0 623.6L198.5 623.6L200.0 623.3L201.5 623.0L203.0 623.4L204.4 623.3L205.9 623.5L207.4 623.3L208.9 623.0L210.3 623.0L211.8 623.1L213.3 623.0L214.7 622.7L216.2 623.1L217.6 622.9L219.0 623.0L220.4 623.0L221.9 623.5L223.3 623.1L224.7 623.2L226.2 623.4L227.6 623.7L229.0 623.3L230.4 623.6L231.9 623.7L233.3 623.7L234.7 623.9L236.1 623.8L237.5 623.8L238.9 623.4L240.3 623.5L241.7 623.4L243.1 623.7L244.5 623.7L245.9 623.1L247.4 623.1L248.8 623.1L250.2 623.1L251.6 623.2L253.0 623.2L254.4 623.0L255.8 622.8L257.2 623.0L258.6 623.0L260.0 623.0L261.5 623.0L263.0 623.1L264.6 622.9L266.1 622.6L267.6 622.6L269.1 622.6L270.6 622.1L272.1 622.5L273.7 622.4L275.2 622.3L276.7 622.0L278.2 622.1L279.7 621.7L281.1 621.5L282.6 621.2L284.1 621.4L285.6 620.9L287.0 620.8L288.5 620.7L290.0 620.8L291.9 619.2L293.8 618.2L295.6 616.9L297.5 615.8L299.4 615.9L301.2 616.8L303.1 615.4L305.0 615.0L306.5 614.6L308.0 614.4L309.5 614.6L311.0 614.1L312.5 614.5L315.0 612.5L316.7 612.4L318.3 611.5L320.0 610.8L321.7 609.9L323.3 609.6L325.0 609.5L326.9 611.5L328.8 613.8L330.5 613.5L332.1 613.0L333.8 613.2L335.3 612.4L336.8 610.8L357.5 610.8L359.2 605.8L360.9 607.3L362.5 607.5L365.0 606.2L366.9 604.3L368.8 602.5L370.6 599.3L372.5 596.2L374.0 593.6L375.5 592.5L377.1 593.0L378.8 595.0L381.2 602.5L383.8 610.0L385.8 603.8L388.0 605.0L390.0 602.5L391.9 603.5L393.8 605.0L395.6 604.4L397.5 604.5L399.4 606.5L401.2 607.5L402.9 608.6L404.5 610.5L406.2 608.4L408.0 607.5L409.6 607.8L411.2 606.8L413.1 607.8L415.0 608.8L416.8 609.2L418.7 610.5L420.5 611.2L422.0 609.4L423.5 608.8L425.0 607.5L426.7 606.9L428.3 605.6L430.0 603.8L431.5 601.8L433.0 599.2L434.6 598.2L436.2 598.0L437.7 598.8L439.2 600.0L440.9 598.5L442.5 598.2L444.2 598.4L445.8 597.8L447.5 597.5L450.0 592.5L452.5 596.2L454.4 596.1L456.2 595.0L457.9 596.6L459.5 598.8L461.8 602.0L464.5 601.2L466.0 598.6L467.5 597.0L469.2 596.9L470.8 596.6L472.5 595.0L474.2 594.8L475.8 593.9L477.5 592.5L479.2 592.5L480.8 591.7L482.5 590.5L484.2 588.9L485.8 588.5L487.5 587.5L489.4 586.2L491.2 585.5L492.9 585.4L494.5 587.5L497.0 591.2L498.5 588.6L500.0 588.0L502.5 590.0L505.0 586.2L506.5 587.4L508.0 589.5L509.7 590.6L511.5 593.0L513.2 594.2L514.6 594.1L516.1 592.1L517.5 591.2L519.0 591.9L520.5 590.8L522.1 593.5L523.8 594.2L526.2 593.8L528.1 597.5L530.0 599.5L531.9 598.5L533.8 598.0L535.6 600.4L537.5 603.8L540.0 605.0L541.7 603.3L543.3 602.0L545.0 601.2L546.9 600.1L548.8 600.0L551.2 601.2L553.8 600.0L556.2 603.2L558.8 603.8L560.6 602.7L562.5 601.2L565.0 604.2L566.7 604.7L568.3 604.4L570.0 603.8L571.7 602.7L573.3 601.8L575.0 600.5L576.7 599.8L578.3 597.4L580.0 597.0L581.5 596.7L583.0 595.8L584.5 597.8L586.0 598.8L587.5 599.5L589.4 600.2L591.2 600.0L593.1 600.2L595.0 600.5L596.7 600.4L598.3 601.8L600.0 601.8L601.9 602.2L603.8 603.2L605.6 606.1L607.5 608.2L609.4 609.1L611.2 608.8L613.1 609.0L615.0 609.5L616.5 610.2L618.0 611.2L619.6 611.1L621.2 610.0L623.1 610.9L625.0 611.2L626.9 612.7L628.8 615.0L630.4 616.2L632.0 618.0L633.4 617.1L634.8 617.2L636.2 616.2L638.1 617.1L640.0 617.5L641.9 616.5L643.8 616.2L645.6 616.8L647.5 616.8L649.4 615.4L651.2 613.0L653.1 613.6L655.0 613.8L656.9 612.7L658.8 612.0L660.6 612.1L662.5 612.0L664.2 610.7L665.8 609.8L667.5 609.5L669.4 611.3L671.2 612.0L674.0 613.0L675.5 613.2L677.0 613.0L678.5 613.5L680.0 612.9L681.5 613.0L683.4 612.5L685.2 611.2L686.9 612.8L688.5 613.4L690.2 615.0L691.7 614.8L693.1 615.0L694.6 615.0L696.1 615.4L697.5 615.2L699.0 615.5L700.5 615.4L702.1 615.1L703.6 615.9L705.1 615.4L706.7 615.5L708.2 615.6L709.7 615.9L711.3 615.4L712.8 615.5L714.6 614.7L716.5 613.0L718.2 613.0L719.8 613.0L721.5 613.0L723.4 614.4L725.2 615.8L726.8 615.6L728.4 616.2L729.9 616.3L731.5 616.8L733.1 616.0L734.6 616.4L736.2 615.5L737.8 615.5L739.2 615.6L740.7 615.9L742.1 615.9L743.6 615.8L745.0 616.1L746.5 616.2L748.1 616.2L749.6 616.4L751.2 615.7L752.8 616.1L754.3 615.7L755.9 615.7L757.4 616.1L759.0 615.8L760.5 615.2L762.0 614.7L763.5 614.4L765.0 614.0L766.5 613.0L768.0 612.8L769.5 612.9L771.0 612.7L772.5 612.6L774.0 612.5L775.4 612.8L776.9 612.6L778.3 612.8L779.7 612.8L781.1 613.3L782.6 613.1L784.0 613.0L785.7 613.0L787.3 612.7L789.0 611.8L790.5 611.7L792.1 612.2L793.7 612.8L795.2 612.5L796.8 613.2L798.4 612.8L799.9 613.1L801.5 613.8L803.2 612.9L804.8 611.6L806.5 611.2L807.9 610.8L809.4 610.5L810.8 611.1L812.2 611.1L813.6 611.2L815.1 610.2L816.5 610.5L818.2 610.4L819.8 610.0L821.5 609.5L823.1 608.4L824.8 608.2L826.2 609.3L827.6 610.0L829.0 610.0L830.5 609.7L832.1 610.5L833.7 609.9L835.2 610.0L837.8 609.2L839.6 610.0L841.5 610.8L843.0 611.4L844.5 611.2L846.0 610.4L847.5 610.7L849.0 610.8L850.5 610.7L851.9 610.3L853.4 610.0L854.9 610.0L856.3 610.4L857.8 610.0L859.5 610.1L861.1 611.4L862.8 612.0L864.3 611.6L865.9 610.7L867.5 610.7L869.0 610.5L870.7 610.3L872.3 609.8L874.0 609.5L875.7 609.1L877.3 610.4L879.0 610.0L880.4 610.4L881.9 610.6L883.3 609.5L884.7 609.7L886.1 609.4L887.6 610.3L889.0 610.0L890.4 609.8L891.9 609.8L893.3 610.2L894.7 610.9L896.1 611.0L897.6 610.4L899.0 610.8L900.5 610.7L902.1 611.9L903.7 611.8L905.2 612.0L906.7 612.3L908.1 611.7L909.6 611.8L911.1 612.5L912.5 612.3L914.0 612.5L915.4 612.0L916.9 613.0L918.3 612.6L919.7 612.8L921.1 612.0L922.6 612.9L924.0 612.5L925.4 611.9L926.9 612.8L928.3 612.2L929.7 612.0L931.1 612.2L932.6 612.6L934.0 612.0L935.5 612.0L937.0 612.1L938.5 612.7L940.0 612.7L941.5 613.2L943.2 612.4L944.8 612.0L946.5 612.0L948.0 611.2L949.5 611.1L951.0 610.9L952.5 610.6L954.0 610.5L955.9 609.7L957.8 608.2L959.6 608.4L961.5 609.2L963.1 609.2L964.6 608.8L966.2 609.0L967.8 609.2L969.3 608.0L970.8 607.7L972.2 606.8L973.7 607.1L975.2 606.2L976.9 606.7L978.5 606.6L980.2 607.5L981.7 607.2L983.2 607.6L984.8 606.2L986.3 606.9L987.8 606.2L989.3 606.3L990.9 606.6L992.5 607.3L994.0 607.0L995.9 605.4L997.8 604.2L999.6 604.6L1001.5 605.0L1003.2 606.1L1004.8 607.3L1006.5 607.5L1008.1 607.0L1009.6 607.3L1011.2 606.8L1012.8 606.2L1014.3 605.5L1015.9 604.2L1017.5 603.2L1019.0 602.5L1020.5 601.1L1022.0 600.6L1023.5 599.8L1025.0 600.3L1026.5 599.2L1028.2 597.4L1029.8 595.8L1031.5 595.0L1032.9 593.4L1034.4 594.0L1035.8 592.5L1037.4 593.6L1039.0 593.2L1041.5 596.2L1043.3 595.9L1045.2 595.0L1047.1 595.2L1049.0 596.2L1050.9 596.1L1052.8 597.0L1055.2 595.8L1058.0 600.8L1059.7 599.8L1061.3 599.4L1063.0 598.8L1064.9 598.6L1066.8 599.5L1068.7 599.7L1070.5 600.0L1072.3 600.2L1074.2 601.2L1075.9 601.4L1077.5 600.8L1079.2 599.5L1080.7 596.7L1082.2 593.8L1083.7 593.1L1085.3 594.3L1086.8 593.2L1088.5 593.0L1090.1 593.3L1091.8 593.8L1093.3 593.3L1094.9 594.4L1096.5 595.0L1098.0 595.5L1099.5 595.7L1101.1 595.3L1102.7 596.0L1104.2 596.2L1106.1 595.7L1108.0 597.0L1109.9 598.1L1111.8 600.0L1113.5 598.3L1115.1 597.8L1116.8 597.0L1118.7 595.6L1120.5 595.8L1122.2 595.3L1123.8 596.2L1125.5 597.0L1127.3 598.6L1129.2 601.2L1130.7 603.6L1132.2 605.8L1133.8 604.5L1135.5 603.2L1137.2 603.3L1138.8 603.0L1140.5 602.5L1142.3 602.6L1144.2 602.0L1146.1 604.1L1148.0 605.0L1149.5 605.5L1151.0 606.1L1152.5 607.0L1154.3 607.3L1156.2 605.7L1158.0 605.8L1159.7 605.3L1161.3 604.3L1163.0 603.2L1164.7 603.1L1166.3 604.9L1168.0 605.0L1169.7 605.8L1171.3 605.7L1173.0 605.8L1174.7 605.3L1176.3 604.5L1178.0 603.2L1179.7 602.7L1181.3 603.2L1183.0 603.2L1184.7 603.8L1186.3 604.9L1188.0 605.0L1190.5 602.0L1192.0 600.3L1193.5 597.5L1195.2 599.1L1196.8 599.5L1198.7 598.4L1200.5 597.0L1202.3 596.7L1204.2 595.0L1206.1 594.9L1208.0 594.2L1209.9 594.0L1211.8 593.0L1213.2 592.3L1214.6 591.7L1216.0 592.5L1217.6 594.1L1219.2 597.0L1221.1 596.3L1223.0 596.2L1224.5 595.0L1226.1 596.0L1227.7 595.0L1229.2 594.5L1231.8 597.5L1233.5 598.0L1235.1 598.2L1236.8 598.2L1238.3 598.7L1239.9 598.5L1241.5 597.8L1243.0 598.8L1244.7 600.4L1246.3 601.3L1248.0 602.0L1249.5 602.3L1251.1 602.7L1252.7 603.1L1254.2 603.2L1255.9 602.3L1257.5 603.1L1259.2 602.5L1261.1 604.0L1263.0 606.2L1264.5 606.5L1266.1 607.5L1267.7 609.0L1269.2 609.5L1270.8 609.0L1272.3 609.5L1273.9 609.6L1275.5 608.8L1277.2 608.9L1278.8 608.9L1280.5 609.2L1282.2 610.0L1283.8 611.1L1285.5 611.8L1287.3 613.1L1289.2 613.8L1290.9 613.5L1292.5 613.1L1294.2 612.5L1295.8 611.6L1297.3 611.2L1298.9 610.9L1300.5 610.8L1302.1 610.9L1303.7 610.2L1305.2 610.3L1306.8 610.0L1309.2 604.5L1310.8 603.7L1312.3 603.7L1313.9 603.9L1315.5 604.2L1317.1 604.4L1318.7 604.3L1320.2 604.2L1321.8 603.8L1323.5 603.7L1325.1 604.3L1326.8 604.5L1328.4 603.4L1330.0 602.5L1331.5 603.3L1333.0 604.2L1334.7 604.2L1336.3 605.8L1338.0 605.8L1339.5 605.2L1341.1 606.1L1342.7 605.8L1344.2 605.0L1346.1 603.3L1348.0 603.0L1349.9 601.2L1351.8 599.5L1353.7 597.8L1355.5 595.0L1357.3 595.3L1359.2 593.8L1361.1 594.7L1363.0 595.8L1364.9 593.1L1366.8 591.2L1368.3 588.4L1369.8 586.8L1371.4 588.5L1373.0 588.2L1374.6 586.0L1376.2 585.0L1377.6 586.0L1379.1 585.9L1380.5 587.5L1382.3 588.2L1384.2 588.8L1386.1 589.1L1388.0 587.5L1389.9 586.0L1391.8 586.2L1393.7 588.2L1395.5 588.8L1397.3 590.0L1399.2 591.2L1400.9 590.8L1402.5 589.2L1404.2 587.5L1406.1 588.2L1408.0 590.0L1410.5 593.0L1412.3 593.2L1414.2 591.8L1416.1 591.5L1418.0 591.2L1419.9 591.6L1421.8 593.8L1423.7 594.5L1425.5 597.0L1427.3 596.4L1429.2 595.8L1431.1 597.2L1433.0 598.8L1434.9 599.7L1436.8 601.2L1438.7 600.0L1440.5 600.0L1442.2 599.2L1444.0 599.0L1445.4 598.9L1446.9 600.1L1448.3 598.9L1449.7 600.4L1451.1 600.8L1452.6 599.8L1454.0 600.7L1455.4 601.2L1456.9 600.6L1458.3 600.6L1459.7 599.4L1461.1 599.3L1462.6 599.1L1464.0 599.0L1465.7 599.5L1467.3 598.5L1469.0 597.8L1470.7 597.7L1472.4 598.3L1474.0 598.9L1475.7 600.0L1477.1 599.8L1478.6 600.5L1480.0 601.7L1480 638L95 638Z" fill="#0b1020"/>
<path d="M95.0 625.0L96.4 625.0L97.9 625.1L99.3 625.5L100.7 625.3L102.1 625.7L103.6 625.8L105.0 626.0L106.4 625.7L107.8 625.9L109.2 625.7L110.7 625.8L112.1 625.6L113.5 625.6L114.9 625.7L116.3 625.9L117.7 625.5L119.2 625.5L120.6 625.7L122.0 625.8L123.4 625.6L124.8 625.5L126.2 625.7L127.6 625.2L129.1 625.6L130.5 625.3L131.9 625.1L133.3 625.3L134.7 625.1L136.1 625.2L137.5 625.4L138.9 625.1L140.3 625.3L141.7 625.3L143.1 625.1L144.5 625.2L145.9 624.9L147.4 624.9L148.8 625.0L150.2 625.2L151.6 625.1L153.0 625.0L154.4 625.1L155.8 625.0L157.2 624.9L158.6 625.2L160.0 625.1L161.4 624.8L162.8 625.0L164.2 625.0L165.6 625.1L167.0 625.0L168.4 624.8L169.8 625.2L171.2 624.7L172.6 624.8L174.1 625.0L175.5 624.6L176.9 624.8L178.3 624.5L179.7 624.9L181.1 624.9L182.5 624.8L183.9 624.9L185.3 624.6L186.7 624.7L188.2 624.7L189.7 624.4L191.1 624.3L192.6 624.1L194.1 624.1L195.6 624.0L197.0 623.6L198.5 623.6L200.0 623.3L201.5 623.0L203.0 623.4L204.4 623.3L205.9 623.5L207.4 623.3L208.9 623.0L210.3 623.0L211.8 623.1L213.3 623.0L214.7 622.7L216.2 623.1L217.6 622.9L219.0 623.0L220.4 623.0L221.9 623.5L223.3 623.1L224.7 623.2L226.2 623.4L227.6 623.7L229.0 623.3L230.4 623.6L231.9 623.7L233.3 623.7L234.7 623.9L236.1 623.8L237.5 623.8L238.9 623.4L240.3 623.5L241.7 623.4L243.1 623.7L244.5 623.7L245.9 623.1L247.4 623.1L248.8 623.1L250.2 623.1L251.6 623.2L253.0 623.2L254.4 623.0L255.8 622.8L257.2 623.0L258.6 623.0L260.0 623.0L261.5 623.0L263.0 623.1L264.6 622.9L266.1 622.6L267.6 622.6L269.1 622.6L270.6 622.1L272.1 622.5L273.7 622.4L275.2 622.3L276.7 622.0L278.2 622.1L279.7 621.7L281.1 621.5L282.6 621.2L284.1 621.4L285.6 620.9L287.0 620.8L288.5 620.7L290.0 620.8L291.9 619.2L293.8 618.2L295.6 616.9L297.5 615.8L299.4 615.9L301.2 616.8L303.1 615.4L305.0 615.0L306.5 614.6L308.0 614.4L309.5 614.6L311.0 614.1L312.5 614.5L315.0 612.5L316.7 612.4L318.3 611.5L320.0 610.8L321.7 609.9L323.3 609.6L325.0 609.5L326.9 611.5L328.8 613.8L330.5 613.5L332.1 613.0L333.8 613.2L335.3 612.4L336.8 610.8L357.5 610.8L359.2 605.8L360.9 607.3L362.5 607.5L365.0 606.2L366.9 604.3L368.8 602.5L370.6 599.3L372.5 596.2L374.0 593.6L375.5 592.5L377.1 593.0L378.8 595.0L381.2 602.5L383.8 610.0L385.8 603.8L388.0 605.0L390.0 602.5L391.9 603.5L393.8 605.0L395.6 604.4L397.5 604.5L399.4 606.5L401.2 607.5L402.9 608.6L404.5 610.5L406.2 608.4L408.0 607.5L409.6 607.8L411.2 606.8L413.1 607.8L415.0 608.8L416.8 609.2L418.7 610.5L420.5 611.2L422.0 609.4L423.5 608.8L425.0 607.5L426.7 606.9L428.3 605.6L430.0 603.8L431.5 601.8L433.0 599.2L434.6 598.2L436.2 598.0L437.7 598.8L439.2 600.0L440.9 598.5L442.5 598.2L444.2 598.4L445.8 597.8L447.5 597.5L450.0 592.5L452.5 596.2L454.4 596.1L456.2 595.0L457.9 596.6L459.5 598.8L461.8 602.0L464.5 601.2L466.0 598.6L467.5 597.0L469.2 596.9L470.8 596.6L472.5 595.0L474.2 594.8L475.8 593.9L477.5 592.5L479.2 592.5L480.8 591.7L482.5 590.5L484.2 588.9L485.8 588.5L487.5 587.5L489.4 586.2L491.2 585.5L492.9 585.4L494.5 587.5L497.0 591.2L498.5 588.6L500.0 588.0L502.5 590.0L505.0 586.2L506.5 587.4L508.0 589.5L509.7 590.6L511.5 593.0L513.2 594.2L514.6 594.1L516.1 592.1L517.5 591.2L519.0 591.9L520.5 590.8L522.1 593.5L523.8 594.2L526.2 593.8L528.1 597.5L530.0 599.5L531.9 598.5L533.8 598.0L535.6 600.4L537.5 603.8L540.0 605.0L541.7 603.3L543.3 602.0L545.0 601.2L546.9 600.1L548.8 600.0L551.2 601.2L553.8 600.0L556.2 603.2L558.8 603.8L560.6 602.7L562.5 601.2L565.0 604.2L566.7 604.7L568.3 604.4L570.0 603.8L571.7 602.7L573.3 601.8L575.0 600.5L576.7 599.8L578.3 597.4L580.0 597.0L581.5 596.7L583.0 595.8L584.5 597.8L586.0 598.8L587.5 599.5L589.4 600.2L591.2 600.0L593.1 600.2L595.0 600.5L596.7 600.4L598.3 601.8L600.0 601.8L601.9 602.2L603.8 603.2L605.6 606.1L607.5 608.2L609.4 609.1L611.2 608.8L613.1 609.0L615.0 609.5L616.5 610.2L618.0 611.2L619.6 611.1L621.2 610.0L623.1 610.9L625.0 611.2L626.9 612.7L628.8 615.0L630.4 616.2L632.0 618.0L633.4 617.1L634.8 617.2L636.2 616.2L638.1 617.1L640.0 617.5L641.9 616.5L643.8 616.2L645.6 616.8L647.5 616.8L649.4 615.4L651.2 613.0L653.1 613.6L655.0 613.8L656.9 612.7L658.8 612.0L660.6 612.1L662.5 612.0L664.2 610.7L665.8 609.8L667.5 609.5L669.4 611.3L671.2 612.0L674.0 613.0L675.5 613.2L677.0 613.0L678.5 613.5L680.0 612.9L681.5 613.0L683.4 612.5L685.2 611.2L686.9 612.8L688.5 613.4L690.2 615.0L691.7 614.8L693.1 615.0L694.6 615.0L696.1 615.4L697.5 615.2L699.0 615.5L700.5 615.4L702.1 615.1L703.6 615.9L705.1 615.4L706.7 615.5L708.2 615.6L709.7 615.9L711.3 615.4L712.8 615.5L714.6 614.7L716.5 613.0L718.2 613.0L719.8 613.0L721.5 613.0L723.4 614.4L725.2 615.8L726.8 615.6L728.4 616.2L729.9 616.3L731.5 616.8L733.1 616.0L734.6 616.4L736.2 615.5L737.8 615.5L739.2 615.6L740.7 615.9L742.1 615.9L743.6 615.8L745.0 616.1L746.5 616.2L748.1 616.2L749.6 616.4L751.2 615.7L752.8 616.1L754.3 615.7L755.9 615.7L757.4 616.1L759.0 615.8L760.5 615.2L762.0 614.7L763.5 614.4L765.0 614.0L766.5 613.0L768.0 612.8L769.5 612.9L771.0 612.7L772.5 612.6L774.0 612.5L775.4 612.8L776.9 612.6L778.3 612.8L779.7 612.8L781.1 613.3L782.6 613.1L784.0 613.0L785.7 613.0L787.3 612.7L789.0 611.8L790.5 611.7L792.1 612.2L793.7 612.8L795.2 612.5L796.8 613.2L798.4 612.8L799.9 613.1L801.5 613.8L803.2 612.9L804.8 611.6L806.5 611.2L807.9 610.8L809.4 610.5L810.8 611.1L812.2 611.1L813.6 611.2L815.1 610.2L816.5 610.5L818.2 610.4L819.8 610.0L821.5 609.5L823.1 608.4L824.8 608.2L826.2 609.3L827.6 610.0L829.0 610.0L830.5 609.7L832.1 610.5L833.7 609.9L835.2 610.0L837.8 609.2L839.6 610.0L841.5 610.8L843.0 611.4L844.5 611.2L846.0 610.4L847.5 610.7L849.0 610.8L850.5 610.7L851.9 610.3L853.4 610.0L854.9 610.0L856.3 610.4L857.8 610.0L859.5 610.1L861.1 611.4L862.8 612.0L864.3 611.6L865.9 610.7L867.5 610.7L869.0 610.5L870.7 610.3L872.3 609.8L874.0 609.5L875.7 609.1L877.3 610.4L879.0 610.0L880.4 610.4L881.9 610.6L883.3 609.5L884.7 609.7L886.1 609.4L887.6 610.3L889.0 610.0L890.4 609.8L891.9 609.8L893.3 610.2L894.7 610.9L896.1 611.0L897.6 610.4L899.0 610.8L900.5 610.7L902.1 611.9L903.7 611.8L905.2 612.0L906.7 612.3L908.1 611.7L909.6 611.8L911.1 612.5L912.5 612.3L914.0 612.5L915.4 612.0L916.9 613.0L918.3 612.6L919.7 612.8L921.1 612.0L922.6 612.9L924.0 612.5L925.4 611.9L926.9 612.8L928.3 612.2L929.7 612.0L931.1 612.2L932.6 612.6L934.0 612.0L935.5 612.0L937.0 612.1L938.5 612.7L940.0 612.7L941.5 613.2L943.2 612.4L944.8 612.0L946.5 612.0L948.0 611.2L949.5 611.1L951.0 610.9L952.5 610.6L954.0 610.5L955.9 609.7L957.8 608.2L959.6 608.4L961.5 609.2L963.1 609.2L964.6 608.8L966.2 609.0L967.8 609.2L969.3 608.0L970.8 607.7L972.2 606.8L973.7 607.1L975.2 606.2L976.9 606.7L978.5 606.6L980.2 607.5L981.7 607.2L983.2 607.6L984.8 606.2L986.3 606.9L987.8 606.2L989.3 606.3L990.9 606.6L992.5 607.3L994.0 607.0L995.9 605.4L997.8 604.2L999.6 604.6L1001.5 605.0L1003.2 606.1L1004.8 607.3L1006.5 607.5L1008.1 607.0L1009.6 607.3L1011.2 606.8L1012.8 606.2L1014.3 605.5L1015.9 604.2L1017.5 603.2L1019.0 602.5L1020.5 601.1L1022.0 600.6L1023.5 599.8L1025.0 600.3L1026.5 599.2L1028.2 597.4L1029.8 595.8L1031.5 595.0L1032.9 593.4L1034.4 594.0L1035.8 592.5L1037.4 593.6L1039.0 593.2L1041.5 596.2L1043.3 595.9L1045.2 595.0L1047.1 595.2L1049.0 596.2L1050.9 596.1L1052.8 597.0L1055.2 595.8L1058.0 600.8L1059.7 599.8L1061.3 599.4L1063.0 598.8L1064.9 598.6L1066.8 599.5L1068.7 599.7L1070.5 600.0L1072.3 600.2L1074.2 601.2L1075.9 601.4L1077.5 600.8L1079.2 599.5L1080.7 596.7L1082.2 593.8L1083.7 593.1L1085.3 594.3L1086.8 593.2L1088.5 593.0L1090.1 593.3L1091.8 593.8L1093.3 593.3L1094.9 594.4L1096.5 595.0L1098.0 595.5L1099.5 595.7L1101.1 595.3L1102.7 596.0L1104.2 596.2L1106.1 595.7L1108.0 597.0L1109.9 598.1L1111.8 600.0L1113.5 598.3L1115.1 597.8L1116.8 597.0L1118.7 595.6L1120.5 595.8L1122.2 595.3L1123.8 596.2L1125.5 597.0L1127.3 598.6L1129.2 601.2L1130.7 603.6L1132.2 605.8L1133.8 604.5L1135.5 603.2L1137.2 603.3L1138.8 603.0L1140.5 602.5L1142.3 602.6L1144.2 602.0L1146.1 604.1L1148.0 605.0L1149.5 605.5L1151.0 606.1L1152.5 607.0L1154.3 607.3L1156.2 605.7L1158.0 605.8L1159.7 605.3L1161.3 604.3L1163.0 603.2L1164.7 603.1L1166.3 604.9L1168.0 605.0L1169.7 605.8L1171.3 605.7L1173.0 605.8L1174.7 605.3L1176.3 604.5L1178.0 603.2L1179.7 602.7L1181.3 603.2L1183.0 603.2L1184.7 603.8L1186.3 604.9L1188.0 605.0L1190.5 602.0L1192.0 600.3L1193.5 597.5L1195.2 599.1L1196.8 599.5L1198.7 598.4L1200.5 597.0L1202.3 596.7L1204.2 595.0L1206.1 594.9L1208.0 594.2L1209.9 594.0L1211.8 593.0L1213.2 592.3L1214.6 591.7L1216.0 592.5L1217.6 594.1L1219.2 597.0L1221.1 596.3L1223.0 596.2L1224.5 595.0L1226.1 596.0L1227.7 595.0L1229.2 594.5L1231.8 597.5L1233.5 598.0L1235.1 598.2L1236.8 598.2L1238.3 598.7L1239.9 598.5L1241.5 597.8L1243.0 598.8L1244.7 600.4L1246.3 601.3L1248.0 602.0L1249.5 602.3L1251.1 602.7L1252.7 603.1L1254.2 603.2L1255.9 602.3L1257.5 603.1L1259.2 602.5L1261.1 604.0L1263.0 606.2L1264.5 606.5L1266.1 607.5L1267.7 609.0L1269.2 609.5L1270.8 609.0L1272.3 609.5L1273.9 609.6L1275.5 608.8L1277.2 608.9L1278.8 608.9L1280.5 609.2L1282.2 610.0L1283.8 611.1L1285.5 611.8L1287.3 613.1L1289.2 613.8L1290.9 613.5L1292.5 613.1L1294.2 612.5L1295.8 611.6L1297.3 611.2L1298.9 610.9L1300.5 610.8L1302.1 610.9L1303.7 610.2L1305.2 610.3L1306.8 610.0L1309.2 604.5L1310.8 603.7L1312.3 603.7L1313.9 603.9L1315.5 604.2L1317.1 604.4L1318.7 604.3L1320.2 604.2L1321.8 603.8L1323.5 603.7L1325.1 604.3L1326.8 604.5L1328.4 603.4L1330.0 602.5L1331.5 603.3L1333.0 604.2L1334.7 604.2L1336.3 605.8L1338.0 605.8L1339.5 605.2L1341.1 606.1L1342.7 605.8L1344.2 605.0L1346.1 603.3L1348.0 603.0L1349.9 601.2L1351.8 599.5L1353.7 597.8L1355.5 595.0L1357.3 595.3L1359.2 593.8L1361.1 594.7L1363.0 595.8L1364.9 593.1L1366.8 591.2L1368.3 588.4L1369.8 586.8L1371.4 588.5L1373.0 588.2L1374.6 586.0L1376.2 585.0L1377.6 586.0L1379.1 585.9L1380.5 587.5L1382.3 588.2L1384.2 588.8L1386.1 589.1L1388.0 587.5L1389.9 586.0L1391.8 586.2L1393.7 588.2L1395.5 588.8L1397.3 590.0L1399.2 591.2L1400.9 590.8L1402.5 589.2L1404.2 587.5L1406.1 588.2L1408.0 590.0L1410.5 593.0L1412.3 593.2L1414.2 591.8L1416.1 591.5L1418.0 591.2L1419.9 591.6L1421.8 593.8L1423.7 594.5L1425.5 597.0L1427.3 596.4L1429.2 595.8L1431.1 597.2L1433.0 598.8L1434.9 599.7L1436.8 601.2L1438.7 600.0L1440.5 600.0L1442.2 599.2L1444.0 599.0L1445.4 598.9L1446.9 600.1L1448.3 598.9L1449.7 600.4L1451.1 600.8L1452.6 599.8L1454.0 600.7L1455.4 601.2L1456.9 600.6L1458.3 600.6L1459.7 599.4L1461.1 599.3L1462.6 599.1L1464.0 599.0L1465.7 599.5L1467.3 598.5L1469.0 597.8L1470.7 597.7L1472.4 598.3L1474.0 598.9L1475.7 600.0L1477.1 599.8L1478.6 600.5L1480.0 601.7" fill="none" stroke="#2c4c92" stroke-width="1"/>
<rect x="1225.2" y="572.4" width="254.8" height="65.6" fill="#4060c0" fill-opacity="0.07"/>
<g clip-path="url(#sel)"><path d="M95.0 625.0L96.4 625.0L97.9 625.1L99.3 625.5L100.7 625.3L102.1 625.7L103.6 625.8L105.0 626.0L106.4 625.7L107.8 625.9L109.2 625.7L110.7 625.8L112.1 625.6L113.5 625.6L114.9 625.7L116.3 625.9L117.7 625.5L119.2 625.5L120.6 625.7L122.0 625.8L123.4 625.6L124.8 625.5L126.2 625.7L127.6 625.2L129.1 625.6L130.5 625.3L131.9 625.1L133.3 625.3L134.7 625.1L136.1 625.2L137.5 625.4L138.9 625.1L140.3 625.3L141.7 625.3L143.1 625.1L144.5 625.2L145.9 624.9L147.4 624.9L148.8 625.0L150.2 625.2L151.6 625.1L153.0 625.0L154.4 625.1L155.8 625.0L157.2 624.9L158.6 625.2L160.0 625.1L161.4 624.8L162.8 625.0L164.2 625.0L165.6 625.1L167.0 625.0L168.4 624.8L169.8 625.2L171.2 624.7L172.6 624.8L174.1 625.0L175.5 624.6L176.9 624.8L178.3 624.5L179.7 624.9L181.1 624.9L182.5 624.8L183.9 624.9L185.3 624.6L186.7 624.7L188.2 624.7L189.7 624.4L191.1 624.3L192.6 624.1L194.1 624.1L195.6 624.0L197.0 623.6L198.5 623.6L200.0 623.3L201.5 623.0L203.0 623.4L204.4 623.3L205.9 623.5L207.4 623.3L208.9 623.0L210.3 623.0L211.8 623.1L213.3 623.0L214.7 622.7L216.2 623.1L217.6 622.9L219.0 623.0L220.4 623.0L221.9 623.5L223.3 623.1L224.7 623.2L226.2 623.4L227.6 623.7L229.0 623.3L230.4 623.6L231.9 623.7L233.3 623.7L234.7 623.9L236.1 623.8L237.5 623.8L238.9 623.4L240.3 623.5L241.7 623.4L243.1 623.7L244.5 623.7L245.9 623.1L247.4 623.1L248.8 623.1L250.2 623.1L251.6 623.2L253.0 623.2L254.4 623.0L255.8 622.8L257.2 623.0L258.6 623.0L260.0 623.0L261.5 623.0L263.0 623.1L264.6 622.9L266.1 622.6L267.6 622.6L269.1 622.6L270.6 622.1L272.1 622.5L273.7 622.4L275.2 622.3L276.7 622.0L278.2 622.1L279.7 621.7L281.1 621.5L282.6 621.2L284.1 621.4L285.6 620.9L287.0 620.8L288.5 620.7L290.0 620.8L291.9 619.2L293.8 618.2L295.6 616.9L297.5 615.8L299.4 615.9L301.2 616.8L303.1 615.4L305.0 615.0L306.5 614.6L308.0 614.4L309.5 614.6L311.0 614.1L312.5 614.5L315.0 612.5L316.7 612.4L318.3 611.5L320.0 610.8L321.7 609.9L323.3 609.6L325.0 609.5L326.9 611.5L328.8 613.8L330.5 613.5L332.1 613.0L333.8 613.2L335.3 612.4L336.8 610.8L357.5 610.8L359.2 605.8L360.9 607.3L362.5 607.5L365.0 606.2L366.9 604.3L368.8 602.5L370.6 599.3L372.5 596.2L374.0 593.6L375.5 592.5L377.1 593.0L378.8 595.0L381.2 602.5L383.8 610.0L385.8 603.8L388.0 605.0L390.0 602.5L391.9 603.5L393.8 605.0L395.6 604.4L397.5 604.5L399.4 606.5L401.2 607.5L402.9 608.6L404.5 610.5L406.2 608.4L408.0 607.5L409.6 607.8L411.2 606.8L413.1 607.8L415.0 608.8L416.8 609.2L418.7 610.5L420.5 611.2L422.0 609.4L423.5 608.8L425.0 607.5L426.7 606.9L428.3 605.6L430.0 603.8L431.5 601.8L433.0 599.2L434.6 598.2L436.2 598.0L437.7 598.8L439.2 600.0L440.9 598.5L442.5 598.2L444.2 598.4L445.8 597.8L447.5 597.5L450.0 592.5L452.5 596.2L454.4 596.1L456.2 595.0L457.9 596.6L459.5 598.8L461.8 602.0L464.5 601.2L466.0 598.6L467.5 597.0L469.2 596.9L470.8 596.6L472.5 595.0L474.2 594.8L475.8 593.9L477.5 592.5L479.2 592.5L480.8 591.7L482.5 590.5L484.2 588.9L485.8 588.5L487.5 587.5L489.4 586.2L491.2 585.5L492.9 585.4L494.5 587.5L497.0 591.2L498.5 588.6L500.0 588.0L502.5 590.0L505.0 586.2L506.5 587.4L508.0 589.5L509.7 590.6L511.5 593.0L513.2 594.2L514.6 594.1L516.1 592.1L517.5 591.2L519.0 591.9L520.5 590.8L522.1 593.5L523.8 594.2L526.2 593.8L528.1 597.5L530.0 599.5L531.9 598.5L533.8 598.0L535.6 600.4L537.5 603.8L540.0 605.0L541.7 603.3L543.3 602.0L545.0 601.2L546.9 600.1L548.8 600.0L551.2 601.2L553.8 600.0L556.2 603.2L558.8 603.8L560.6 602.7L562.5 601.2L565.0 604.2L566.7 604.7L568.3 604.4L570.0 603.8L571.7 602.7L573.3 601.8L575.0 600.5L576.7 599.8L578.3 597.4L580.0 597.0L581.5 596.7L583.0 595.8L584.5 597.8L586.0 598.8L587.5 599.5L589.4 600.2L591.2 600.0L593.1 600.2L595.0 600.5L596.7 600.4L598.3 601.8L600.0 601.8L601.9 602.2L603.8 603.2L605.6 606.1L607.5 608.2L609.4 609.1L611.2 608.8L613.1 609.0L615.0 609.5L616.5 610.2L618.0 611.2L619.6 611.1L621.2 610.0L623.1 610.9L625.0 611.2L626.9 612.7L628.8 615.0L630.4 616.2L632.0 618.0L633.4 617.1L634.8 617.2L636.2 616.2L638.1 617.1L640.0 617.5L641.9 616.5L643.8 616.2L645.6 616.8L647.5 616.8L649.4 615.4L651.2 613.0L653.1 613.6L655.0 613.8L656.9 612.7L658.8 612.0L660.6 612.1L662.5 612.0L664.2 610.7L665.8 609.8L667.5 609.5L669.4 611.3L671.2 612.0L674.0 613.0L675.5 613.2L677.0 613.0L678.5 613.5L680.0 612.9L681.5 613.0L683.4 612.5L685.2 611.2L686.9 612.8L688.5 613.4L690.2 615.0L691.7 614.8L693.1 615.0L694.6 615.0L696.1 615.4L697.5 615.2L699.0 615.5L700.5 615.4L702.1 615.1L703.6 615.9L705.1 615.4L706.7 615.5L708.2 615.6L709.7 615.9L711.3 615.4L712.8 615.5L714.6 614.7L716.5 613.0L718.2 613.0L719.8 613.0L721.5 613.0L723.4 614.4L725.2 615.8L726.8 615.6L728.4 616.2L729.9 616.3L731.5 616.8L733.1 616.0L734.6 616.4L736.2 615.5L737.8 615.5L739.2 615.6L740.7 615.9L742.1 615.9L743.6 615.8L745.0 616.1L746.5 616.2L748.1 616.2L749.6 616.4L751.2 615.7L752.8 616.1L754.3 615.7L755.9 615.7L757.4 616.1L759.0 615.8L760.5 615.2L762.0 614.7L763.5 614.4L765.0 614.0L766.5 613.0L768.0 612.8L769.5 612.9L771.0 612.7L772.5 612.6L774.0 612.5L775.4 612.8L776.9 612.6L778.3 612.8L779.7 612.8L781.1 613.3L782.6 613.1L784.0 613.0L785.7 613.0L787.3 612.7L789.0 611.8L790.5 611.7L792.1 612.2L793.7 612.8L795.2 612.5L796.8 613.2L798.4 612.8L799.9 613.1L801.5 613.8L803.2 612.9L804.8 611.6L806.5 611.2L807.9 610.8L809.4 610.5L810.8 611.1L812.2 611.1L813.6 611.2L815.1 610.2L816.5 610.5L818.2 610.4L819.8 610.0L821.5 609.5L823.1 608.4L824.8 608.2L826.2 609.3L827.6 610.0L829.0 610.0L830.5 609.7L832.1 610.5L833.7 609.9L835.2 610.0L837.8 609.2L839.6 610.0L841.5 610.8L843.0 611.4L844.5 611.2L846.0 610.4L847.5 610.7L849.0 610.8L850.5 610.7L851.9 610.3L853.4 610.0L854.9 610.0L856.3 610.4L857.8 610.0L859.5 610.1L861.1 611.4L862.8 612.0L864.3 611.6L865.9 610.7L867.5 610.7L869.0 610.5L870.7 610.3L872.3 609.8L874.0 609.5L875.7 609.1L877.3 610.4L879.0 610.0L880.4 610.4L881.9 610.6L883.3 609.5L884.7 609.7L886.1 609.4L887.6 610.3L889.0 610.0L890.4 609.8L891.9 609.8L893.3 610.2L894.7 610.9L896.1 611.0L897.6 610.4L899.0 610.8L900.5 610.7L902.1 611.9L903.7 611.8L905.2 612.0L906.7 612.3L908.1 611.7L909.6 611.8L911.1 612.5L912.5 612.3L914.0 612.5L915.4 612.0L916.9 613.0L918.3 612.6L919.7 612.8L921.1 612.0L922.6 612.9L924.0 612.5L925.4 611.9L926.9 612.8L928.3 612.2L929.7 612.0L931.1 612.2L932.6 612.6L934.0 612.0L935.5 612.0L937.0 612.1L938.5 612.7L940.0 612.7L941.5 613.2L943.2 612.4L944.8 612.0L946.5 612.0L948.0 611.2L949.5 611.1L951.0 610.9L952.5 610.6L954.0 610.5L955.9 609.7L957.8 608.2L959.6 608.4L961.5 609.2L963.1 609.2L964.6 608.8L966.2 609.0L967.8 609.2L969.3 608.0L970.8 607.7L972.2 606.8L973.7 607.1L975.2 606.2L976.9 606.7L978.5 606.6L980.2 607.5L981.7 607.2L983.2 607.6L984.8 606.2L986.3 606.9L987.8 606.2L989.3 606.3L990.9 606.6L992.5 607.3L994.0 607.0L995.9 605.4L997.8 604.2L999.6 604.6L1001.5 605.0L1003.2 606.1L1004.8 607.3L1006.5 607.5L1008.1 607.0L1009.6 607.3L1011.2 606.8L1012.8 606.2L1014.3 605.5L1015.9 604.2L1017.5 603.2L1019.0 602.5L1020.5 601.1L1022.0 600.6L1023.5 599.8L1025.0 600.3L1026.5 599.2L1028.2 597.4L1029.8 595.8L1031.5 595.0L1032.9 593.4L1034.4 594.0L1035.8 592.5L1037.4 593.6L1039.0 593.2L1041.5 596.2L1043.3 595.9L1045.2 595.0L1047.1 595.2L1049.0 596.2L1050.9 596.1L1052.8 597.0L1055.2 595.8L1058.0 600.8L1059.7 599.8L1061.3 599.4L1063.0 598.8L1064.9 598.6L1066.8 599.5L1068.7 599.7L1070.5 600.0L1072.3 600.2L1074.2 601.2L1075.9 601.4L1077.5 600.8L1079.2 599.5L1080.7 596.7L1082.2 593.8L1083.7 593.1L1085.3 594.3L1086.8 593.2L1088.5 593.0L1090.1 593.3L1091.8 593.8L1093.3 593.3L1094.9 594.4L1096.5 595.0L1098.0 595.5L1099.5 595.7L1101.1 595.3L1102.7 596.0L1104.2 596.2L1106.1 595.7L1108.0 597.0L1109.9 598.1L1111.8 600.0L1113.5 598.3L1115.1 597.8L1116.8 597.0L1118.7 595.6L1120.5 595.8L1122.2 595.3L1123.8 596.2L1125.5 597.0L1127.3 598.6L1129.2 601.2L1130.7 603.6L1132.2 605.8L1133.8 604.5L1135.5 603.2L1137.2 603.3L1138.8 603.0L1140.5 602.5L1142.3 602.6L1144.2 602.0L1146.1 604.1L1148.0 605.0L1149.5 605.5L1151.0 606.1L1152.5 607.0L1154.3 607.3L1156.2 605.7L1158.0 605.8L1159.7 605.3L1161.3 604.3L1163.0 603.2L1164.7 603.1L1166.3 604.9L1168.0 605.0L1169.7 605.8L1171.3 605.7L1173.0 605.8L1174.7 605.3L1176.3 604.5L1178.0 603.2L1179.7 602.7L1181.3 603.2L1183.0 603.2L1184.7 603.8L1186.3 604.9L1188.0 605.0L1190.5 602.0L1192.0 600.3L1193.5 597.5L1195.2 599.1L1196.8 599.5L1198.7 598.4L1200.5 597.0L1202.3 596.7L1204.2 595.0L1206.1 594.9L1208.0 594.2L1209.9 594.0L1211.8 593.0L1213.2 592.3L1214.6 591.7L1216.0 592.5L1217.6 594.1L1219.2 597.0L1221.1 596.3L1223.0 596.2L1224.5 595.0L1226.1 596.0L1227.7 595.0L1229.2 594.5L1231.8 597.5L1233.5 598.0L1235.1 598.2L1236.8 598.2L1238.3 598.7L1239.9 598.5L1241.5 597.8L1243.0 598.8L1244.7 600.4L1246.3 601.3L1248.0 602.0L1249.5 602.3L1251.1 602.7L1252.7 603.1L1254.2 603.2L1255.9 602.3L1257.5 603.1L1259.2 602.5L1261.1 604.0L1263.0 606.2L1264.5 606.5L1266.1 607.5L1267.7 609.0L1269.2 609.5L1270.8 609.0L1272.3 609.5L1273.9 609.6L1275.5 608.8L1277.2 608.9L1278.8 608.9L1280.5 609.2L1282.2 610.0L1283.8 611.1L1285.5 611.8L1287.3 613.1L1289.2 613.8L1290.9 613.5L1292.5 613.1L1294.2 612.5L1295.8 611.6L1297.3 611.2L1298.9 610.9L1300.5 610.8L1302.1 610.9L1303.7 610.2L1305.2 610.3L1306.8 610.0L1309.2 604.5L1310.8 603.7L1312.3 603.7L1313.9 603.9L1315.5 604.2L1317.1 604.4L1318.7 604.3L1320.2 604.2L1321.8 603.8L1323.5 603.7L1325.1 604.3L1326.8 604.5L1328.4 603.4L1330.0 602.5L1331.5 603.3L1333.0 604.2L1334.7 604.2L1336.3 605.8L1338.0 605.8L1339.5 605.2L1341.1 606.1L1342.7 605.8L1344.2 605.0L1346.1 603.3L1348.0 603.0L1349.9 601.2L1351.8 599.5L1353.7 597.8L1355.5 595.0L1357.3 595.3L1359.2 593.8L1361.1 594.7L1363.0 595.8L1364.9 593.1L1366.8 591.2L1368.3 588.4L1369.8 586.8L1371.4 588.5L1373.0 588.2L1374.6 586.0L1376.2 585.0L1377.6 586.0L1379.1 585.9L1380.5 587.5L1382.3 588.2L1384.2 588.8L1386.1 589.1L1388.0 587.5L1389.9 586.0L1391.8 586.2L1393.7 588.2L1395.5 588.8L1397.3 590.0L1399.2 591.2L1400.9 590.8L1402.5 589.2L1404.2 587.5L1406.1 588.2L1408.0 590.0L1410.5 593.0L1412.3 593.2L1414.2 591.8L1416.1 591.5L1418.0 591.2L1419.9 591.6L1421.8 593.8L1423.7 594.5L1425.5 597.0L1427.3 596.4L1429.2 595.8L1431.1 597.2L1433.0 598.8L1434.9 599.7L1436.8 601.2L1438.7 600.0L1440.5 600.0L1442.2 599.2L1444.0 599.0L1445.4 598.9L1446.9 600.1L1448.3 598.9L1449.7 600.4L1451.1 600.8L1452.6 599.8L1454.0 600.7L1455.4 601.2L1456.9 600.6L1458.3 600.6L1459.7 599.4L1461.1 599.3L1462.6 599.1L1464.0 599.0L1465.7 599.5L1467.3 598.5L1469.0 597.8L1470.7 597.7L1472.4 598.3L1474.0 598.9L1475.7 600.0L1477.1 599.8L1478.6 600.5L1480.0 601.7L1480 638L95 638Z" fill="#1e2642"/><path d="M95.0 625.0L96.4 625.0L97.9 625.1L99.3 625.5L100.7 625.3L102.1 625.7L103.6 625.8L105.0 626.0L106.4 625.7L107.8 625.9L109.2 625.7L110.7 625.8L112.1 625.6L113.5 625.6L114.9 625.7L116.3 625.9L117.7 625.5L119.2 625.5L120.6 625.7L122.0 625.8L123.4 625.6L124.8 625.5L126.2 625.7L127.6 625.2L129.1 625.6L130.5 625.3L131.9 625.1L133.3 625.3L134.7 625.1L136.1 625.2L137.5 625.4L138.9 625.1L140.3 625.3L141.7 625.3L143.1 625.1L144.5 625.2L145.9 624.9L147.4 624.9L148.8 625.0L150.2 625.2L151.6 625.1L153.0 625.0L154.4 625.1L155.8 625.0L157.2 624.9L158.6 625.2L160.0 625.1L161.4 624.8L162.8 625.0L164.2 625.0L165.6 625.1L167.0 625.0L168.4 624.8L169.8 625.2L171.2 624.7L172.6 624.8L174.1 625.0L175.5 624.6L176.9 624.8L178.3 624.5L179.7 624.9L181.1 624.9L182.5 624.8L183.9 624.9L185.3 624.6L186.7 624.7L188.2 624.7L189.7 624.4L191.1 624.3L192.6 624.1L194.1 624.1L195.6 624.0L197.0 623.6L198.5 623.6L200.0 623.3L201.5 623.0L203.0 623.4L204.4 623.3L205.9 623.5L207.4 623.3L208.9 623.0L210.3 623.0L211.8 623.1L213.3 623.0L214.7 622.7L216.2 623.1L217.6 622.9L219.0 623.0L220.4 623.0L221.9 623.5L223.3 623.1L224.7 623.2L226.2 623.4L227.6 623.7L229.0 623.3L230.4 623.6L231.9 623.7L233.3 623.7L234.7 623.9L236.1 623.8L237.5 623.8L238.9 623.4L240.3 623.5L241.7 623.4L243.1 623.7L244.5 623.7L245.9 623.1L247.4 623.1L248.8 623.1L250.2 623.1L251.6 623.2L253.0 623.2L254.4 623.0L255.8 622.8L257.2 623.0L258.6 623.0L260.0 623.0L261.5 623.0L263.0 623.1L264.6 622.9L266.1 622.6L267.6 622.6L269.1 622.6L270.6 622.1L272.1 622.5L273.7 622.4L275.2 622.3L276.7 622.0L278.2 622.1L279.7 621.7L281.1 621.5L282.6 621.2L284.1 621.4L285.6 620.9L287.0 620.8L288.5 620.7L290.0 620.8L291.9 619.2L293.8 618.2L295.6 616.9L297.5 615.8L299.4 615.9L301.2 616.8L303.1 615.4L305.0 615.0L306.5 614.6L308.0 614.4L309.5 614.6L311.0 614.1L312.5 614.5L315.0 612.5L316.7 612.4L318.3 611.5L320.0 610.8L321.7 609.9L323.3 609.6L325.0 609.5L326.9 611.5L328.8 613.8L330.5 613.5L332.1 613.0L333.8 613.2L335.3 612.4L336.8 610.8L357.5 610.8L359.2 605.8L360.9 607.3L362.5 607.5L365.0 606.2L366.9 604.3L368.8 602.5L370.6 599.3L372.5 596.2L374.0 593.6L375.5 592.5L377.1 593.0L378.8 595.0L381.2 602.5L383.8 610.0L385.8 603.8L388.0 605.0L390.0 602.5L391.9 603.5L393.8 605.0L395.6 604.4L397.5 604.5L399.4 606.5L401.2 607.5L402.9 608.6L404.5 610.5L406.2 608.4L408.0 607.5L409.6 607.8L411.2 606.8L413.1 607.8L415.0 608.8L416.8 609.2L418.7 610.5L420.5 611.2L422.0 609.4L423.5 608.8L425.0 607.5L426.7 606.9L428.3 605.6L430.0 603.8L431.5 601.8L433.0 599.2L434.6 598.2L436.2 598.0L437.7 598.8L439.2 600.0L440.9 598.5L442.5 598.2L444.2 598.4L445.8 597.8L447.5 597.5L450.0 592.5L452.5 596.2L454.4 596.1L456.2 595.0L457.9 596.6L459.5 598.8L461.8 602.0L464.5 601.2L466.0 598.6L467.5 597.0L469.2 596.9L470.8 596.6L472.5 595.0L474.2 594.8L475.8 593.9L477.5 592.5L479.2 592.5L480.8 591.7L482.5 590.5L484.2 588.9L485.8 588.5L487.5 587.5L489.4 586.2L491.2 585.5L492.9 585.4L494.5 587.5L497.0 591.2L498.5 588.6L500.0 588.0L502.5 590.0L505.0 586.2L506.5 587.4L508.0 589.5L509.7 590.6L511.5 593.0L513.2 594.2L514.6 594.1L516.1 592.1L517.5 591.2L519.0 591.9L520.5 590.8L522.1 593.5L523.8 594.2L526.2 593.8L528.1 597.5L530.0 599.5L531.9 598.5L533.8 598.0L535.6 600.4L537.5 603.8L540.0 605.0L541.7 603.3L543.3 602.0L545.0 601.2L546.9 600.1L548.8 600.0L551.2 601.2L553.8 600.0L556.2 603.2L558.8 603.8L560.6 602.7L562.5 601.2L565.0 604.2L566.7 604.7L568.3 604.4L570.0 603.8L571.7 602.7L573.3 601.8L575.0 600.5L576.7 599.8L578.3 597.4L580.0 597.0L581.5 596.7L583.0 595.8L584.5 597.8L586.0 598.8L587.5 599.5L589.4 600.2L591.2 600.0L593.1 600.2L595.0 600.5L596.7 600.4L598.3 601.8L600.0 601.8L601.9 602.2L603.8 603.2L605.6 606.1L607.5 608.2L609.4 609.1L611.2 608.8L613.1 609.0L615.0 609.5L616.5 610.2L618.0 611.2L619.6 611.1L621.2 610.0L623.1 610.9L625.0 611.2L626.9 612.7L628.8 615.0L630.4 616.2L632.0 618.0L633.4 617.1L634.8 617.2L636.2 616.2L638.1 617.1L640.0 617.5L641.9 616.5L643.8 616.2L645.6 616.8L647.5 616.8L649.4 615.4L651.2 613.0L653.1 613.6L655.0 613.8L656.9 612.7L658.8 612.0L660.6 612.1L662.5 612.0L664.2 610.7L665.8 609.8L667.5 609.5L669.4 611.3L671.2 612.0L674.0 613.0L675.5 613.2L677.0 613.0L678.5 613.5L680.0 612.9L681.5 613.0L683.4 612.5L685.2 611.2L686.9 612.8L688.5 613.4L690.2 615.0L691.7 614.8L693.1 615.0L694.6 615.0L696.1 615.4L697.5 615.2L699.0 615.5L700.5 615.4L702.1 615.1L703.6 615.9L705.1 615.4L706.7 615.5L708.2 615.6L709.7 615.9L711.3 615.4L712.8 615.5L714.6 614.7L716.5 613.0L718.2 613.0L719.8 613.0L721.5 613.0L723.4 614.4L725.2 615.8L726.8 615.6L728.4 616.2L729.9 616.3L731.5 616.8L733.1 616.0L734.6 616.4L736.2 615.5L737.8 615.5L739.2 615.6L740.7 615.9L742.1 615.9L743.6 615.8L745.0 616.1L746.5 616.2L748.1 616.2L749.6 616.4L751.2 615.7L752.8 616.1L754.3 615.7L755.9 615.7L757.4 616.1L759.0 615.8L760.5 615.2L762.0 614.7L763.5 614.4L765.0 614.0L766.5 613.0L768.0 612.8L769.5 612.9L771.0 612.7L772.5 612.6L774.0 612.5L775.4 612.8L776.9 612.6L778.3 612.8L779.7 612.8L781.1 613.3L782.6 613.1L784.0 613.0L785.7 613.0L787.3 612.7L789.0 611.8L790.5 611.7L792.1 612.2L793.7 612.8L795.2 612.5L796.8 613.2L798.4 612.8L799.9 613.1L801.5 613.8L803.2 612.9L804.8 611.6L806.5 611.2L807.9 610.8L809.4 610.5L810.8 611.1L812.2 611.1L813.6 611.2L815.1 610.2L816.5 610.5L818.2 610.4L819.8 610.0L821.5 609.5L823.1 608.4L824.8 608.2L826.2 609.3L827.6 610.0L829.0 610.0L830.5 609.7L832.1 610.5L833.7 609.9L835.2 610.0L837.8 609.2L839.6 610.0L841.5 610.8L843.0 611.4L844.5 611.2L846.0 610.4L847.5 610.7L849.0 610.8L850.5 610.7L851.9 610.3L853.4 610.0L854.9 610.0L856.3 610.4L857.8 610.0L859.5 610.1L861.1 611.4L862.8 612.0L864.3 611.6L865.9 610.7L867.5 610.7L869.0 610.5L870.7 610.3L872.3 609.8L874.0 609.5L875.7 609.1L877.3 610.4L879.0 610.0L880.4 610.4L881.9 610.6L883.3 609.5L884.7 609.7L886.1 609.4L887.6 610.3L889.0 610.0L890.4 609.8L891.9 609.8L893.3 610.2L894.7 610.9L896.1 611.0L897.6 610.4L899.0 610.8L900.5 610.7L902.1 611.9L903.7 611.8L905.2 612.0L906.7 612.3L908.1 611.7L909.6 611.8L911.1 612.5L912.5 612.3L914.0 612.5L915.4 612.0L916.9 613.0L918.3 612.6L919.7 612.8L921.1 612.0L922.6 612.9L924.0 612.5L925.4 611.9L926.9 612.8L928.3 612.2L929.7 612.0L931.1 612.2L932.6 612.6L934.0 612.0L935.5 612.0L937.0 612.1L938.5 612.7L940.0 612.7L941.5 613.2L943.2 612.4L944.8 612.0L946.5 612.0L948.0 611.2L949.5 611.1L951.0 610.9L952.5 610.6L954.0 610.5L955.9 609.7L957.8 608.2L959.6 608.4L961.5 609.2L963.1 609.2L964.6 608.8L966.2 609.0L967.8 609.2L969.3 608.0L970.8 607.7L972.2 606.8L973.7 607.1L975.2 606.2L976.9 606.7L978.5 606.6L980.2 607.5L981.7 607.2L983.2 607.6L984.8 606.2L986.3 606.9L987.8 606.2L989.3 606.3L990.9 606.6L992.5 607.3L994.0 607.0L995.9 605.4L997.8 604.2L999.6 604.6L1001.5 605.0L1003.2 606.1L1004.8 607.3L1006.5 607.5L1008.1 607.0L1009.6 607.3L1011.2 606.8L1012.8 606.2L1014.3 605.5L1015.9 604.2L1017.5 603.2L1019.0 602.5L1020.5 601.1L1022.0 600.6L1023.5 599.8L1025.0 600.3L1026.5 599.2L1028.2 597.4L1029.8 595.8L1031.5 595.0L1032.9 593.4L1034.4 594.0L1035.8 592.5L1037.4 593.6L1039.0 593.2L1041.5 596.2L1043.3 595.9L1045.2 595.0L1047.1 595.2L1049.0 596.2L1050.9 596.1L1052.8 597.0L1055.2 595.8L1058.0 600.8L1059.7 599.8L1061.3 599.4L1063.0 598.8L1064.9 598.6L1066.8 599.5L1068.7 599.7L1070.5 600.0L1072.3 600.2L1074.2 601.2L1075.9 601.4L1077.5 600.8L1079.2 599.5L1080.7 596.7L1082.2 593.8L1083.7 593.1L1085.3 594.3L1086.8 593.2L1088.5 593.0L1090.1 593.3L1091.8 593.8L1093.3 593.3L1094.9 594.4L1096.5 595.0L1098.0 595.5L1099.5 595.7L1101.1 595.3L1102.7 596.0L1104.2 596.2L1106.1 595.7L1108.0 597.0L1109.9 598.1L1111.8 600.0L1113.5 598.3L1115.1 597.8L1116.8 597.0L1118.7 595.6L1120.5 595.8L1122.2 595.3L1123.8 596.2L1125.5 597.0L1127.3 598.6L1129.2 601.2L1130.7 603.6L1132.2 605.8L1133.8 604.5L1135.5 603.2L1137.2 603.3L1138.8 603.0L1140.5 602.5L1142.3 602.6L1144.2 602.0L1146.1 604.1L1148.0 605.0L1149.5 605.5L1151.0 606.1L1152.5 607.0L1154.3 607.3L1156.2 605.7L1158.0 605.8L1159.7 605.3L1161.3 604.3L1163.0 603.2L1164.7 603.1L1166.3 604.9L1168.0 605.0L1169.7 605.8L1171.3 605.7L1173.0 605.8L1174.7 605.3L1176.3 604.5L1178.0 603.2L1179.7 602.7L1181.3 603.2L1183.0 603.2L1184.7 603.8L1186.3 604.9L1188.0 605.0L1190.5 602.0L1192.0 600.3L1193.5 597.5L1195.2 599.1L1196.8 599.5L1198.7 598.4L1200.5 597.0L1202.3 596.7L1204.2 595.0L1206.1 594.9L1208.0 594.2L1209.9 594.0L1211.8 593.0L1213.2 592.3L1214.6 591.7L1216.0 592.5L1217.6 594.1L1219.2 597.0L1221.1 596.3L1223.0 596.2L1224.5 595.0L1226.1 596.0L1227.7 595.0L1229.2 594.5L1231.8 597.5L1233.5 598.0L1235.1 598.2L1236.8 598.2L1238.3 598.7L1239.9 598.5L1241.5 597.8L1243.0 598.8L1244.7 600.4L1246.3 601.3L1248.0 602.0L1249.5 602.3L1251.1 602.7L1252.7 603.1L1254.2 603.2L1255.9 602.3L1257.5 603.1L1259.2 602.5L1261.1 604.0L1263.0 606.2L1264.5 606.5L1266.1 607.5L1267.7 609.0L1269.2 609.5L1270.8 609.0L1272.3 609.5L1273.9 609.6L1275.5 608.8L1277.2 608.9L1278.8 608.9L1280.5 609.2L1282.2 610.0L1283.8 611.1L1285.5 611.8L1287.3 613.1L1289.2 613.8L1290.9 613.5L1292.5 613.1L1294.2 612.5L1295.8 611.6L1297.3 611.2L1298.9 610.9L1300.5 610.8L1302.1 610.9L1303.7 610.2L1305.2 610.3L1306.8 610.0L1309.2 604.5L1310.8 603.7L1312.3 603.7L1313.9 603.9L1315.5 604.2L1317.1 604.4L1318.7 604.3L1320.2 604.2L1321.8 603.8L1323.5 603.7L1325.1 604.3L1326.8 604.5L1328.4 603.4L1330.0 602.5L1331.5 603.3L1333.0 604.2L1334.7 604.2L1336.3 605.8L1338.0 605.8L1339.5 605.2L1341.1 606.1L1342.7 605.8L1344.2 605.0L1346.1 603.3L1348.0 603.0L1349.9 601.2L1351.8 599.5L1353.7 597.8L1355.5 595.0L1357.3 595.3L1359.2 593.8L1361.1 594.7L1363.0 595.8L1364.9 593.1L1366.8 591.2L1368.3 588.4L1369.8 586.8L1371.4 588.5L1373.0 588.2L1374.6 586.0L1376.2 585.0L1377.6 586.0L1379.1 585.9L1380.5 587.5L1382.3 588.2L1384.2 588.8L1386.1 589.1L1388.0 587.5L1389.9 586.0L1391.8 586.2L1393.7 588.2L1395.5 588.8L1397.3 590.0L1399.2 591.2L1400.9 590.8L1402.5 589.2L1404.2 587.5L1406.1 588.2L1408.0 590.0L1410.5 593.0L1412.3 593.2L1414.2 591.8L1416.1 591.5L1418.0 591.2L1419.9 591.6L1421.8 593.8L1423.7 594.5L1425.5 597.0L1427.3 596.4L1429.2 595.8L1431.1 597.2L1433.0 598.8L1434.9 599.7L1436.8 601.2L1438.7 600.0L1440.5 600.0L1442.2 599.2L1444.0 599.0L1445.4 598.9L1446.9 600.1L1448.3 598.9L1449.7 600.4L1451.1 600.8L1452.6 599.8L1454.0 600.7L1455.4 601.2L1456.9 600.6L1458.3 600.6L1459.7 599.4L1461.1 599.3L1462.6 599.1L1464.0 599.0L1465.7 599.5L1467.3 598.5L1469.0 597.8L1470.7 597.7L1472.4 598.3L1474.0 598.9L1475.7 600.0L1477.1 599.8L1478.6 600.5L1480.0 601.7" fill="none" stroke="#5878bd" stroke-width="1"/></g>
<rect x="1219.3999999999999" y="597.6" width="14.4" height="18.8" rx="4.5" fill="#2e3139"/>
<line x1="1224.6999999999998" x2="1224.6999999999998" y1="603.4" y2="610.8" stroke="#9a9da3" stroke-width="1.2"/>
<line x1="1228.5" x2="1228.5" y1="603.4" y2="610.8" stroke="#9a9da3" stroke-width="1.2"/>
<rect x="1472.2" y="597.6" width="14.4" height="18.8" rx="4.5" fill="#2e3139"/>
<line x1="1477.5" x2="1477.5" y1="603.4" y2="610.8" stroke="#9a9da3" stroke-width="1.2"/>
<line x1="1481.3000000000002" x2="1481.3000000000002" y1="603.4" y2="610.8" stroke="#9a9da3" stroke-width="1.2"/>
<rect x="1417.3" y="555" width="130" height="22.7" rx="4" fill="#000"/>
<text x="1424.8" y="569.1" font-size="13" fill="#fff" text-anchor="start" font-weight="400" stroke="#fff" stroke-width="0.55" stroke-linejoin="round" textLength="102.3" lengthAdjust="spacingAndGlyphs" >2 Feb 2026, 03:00</text>
<rect x="1184.6" y="445" width="234" height="115" rx="9" fill="#000" fill-opacity="0.68" filter="url(#ts)"/>
<rect x="1216.6" y="423.2" width="234" height="114.8" rx="9" fill="#020507"/>
<text x="1233.4" y="457.4" font-size="16" fill="#fff" text-anchor="start" font-weight="400" stroke="#fff" stroke-width="0.35" stroke-linejoin="round" textLength="127.8" lengthAdjust="spacingAndGlyphs" >2 Feb 2026, 03:00</text>
<circle cx="1238.1" cy="486.9" r="4.6" fill="#ebbe4f" stroke="#e6e8ea" stroke-width="1.6"/>
<text x="1248.6" y="492.7" font-size="16" fill="#d7dadd" text-anchor="start" font-weight="400" stroke="#d7dadd" stroke-width="0.3" stroke-linejoin="round" textLength="71.4" lengthAdjust="spacingAndGlyphs" >ETH Price</text>
<text x="1433.8" y="492.7" font-size="16" fill="#fff" text-anchor="end" font-weight="400" stroke="#fff" stroke-width="0.35" stroke-linejoin="round" textLength="67.2" lengthAdjust="spacingAndGlyphs" >$2266.90</text>
<circle cx="1238.1" cy="511.1" r="4.6" fill="#1ec683" stroke="#e6e8ea" stroke-width="1.6"/>
<text x="1248.6" y="516.6" font-size="16" fill="#d7dadd" text-anchor="start" font-weight="400" stroke="#d7dadd" stroke-width="0.3" stroke-linejoin="round" textLength="102.4" lengthAdjust="spacingAndGlyphs" >Open Interest</text>
<text x="1433.8" y="516.6" font-size="16" fill="#fff" text-anchor="end" font-weight="400" stroke="#fff" stroke-width="0.35" stroke-linejoin="round" textLength="59.8" lengthAdjust="spacingAndGlyphs" >$27.69B</text>
</svg></body></html>
